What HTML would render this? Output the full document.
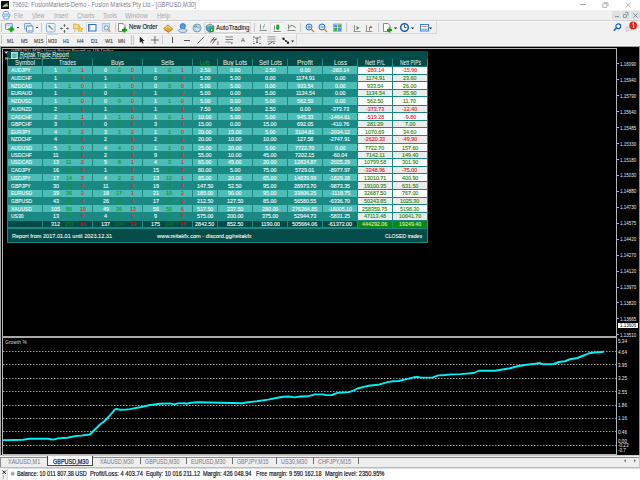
<!DOCTYPE html><html><head><meta charset="utf-8"><style>
*{margin:0;padding:0;box-sizing:border-box}
html,body{width:640px;height:480px;overflow:hidden;background:#f0f0f0;font-family:"Liberation Sans",sans-serif}
.a{position:absolute}
.t{position:absolute;white-space:nowrap;line-height:1}
svg{position:absolute;overflow:visible}
</style></head><body>

<div class="a" style="left:0px;top:0px;width:640px;height:10px;background:#ffffff;"></div>
<div class="a" style="left:1px;top:1px;width:8px;height:8px;background:#101010;"></div>
<svg style="left:1px;top:1px" width="8" height="8"><path d="M1 6.3 Q2.5 3.5 6 2.6 L7.2 5.6 Q4 5.2 1 6.3 Z" fill="#c8ccc8"/><path d="M4.2 3.2 L6.8 1.6 L6.6 3.6 Z" fill="#48a838"/></svg>
<div class="t" style="left:12.20px;top:2.00px;font-size:6.69px;color:#858090;transform:scaleX(0.862);transform-origin:0 0;">79692: FusionMarkets-Demo - Fusion Markets Pty Ltd - [GBPUSD,M30]</div>
<div class="a" style="left:580px;top:4px;width:6px;height:1px;background:#a8a8a8;"></div>
<svg style="left:601.5px;top:2px" width="7" height="6"><path d="M0.8 1.8 h4 v3.6 h-4 z M2 0.6 h4 v3.6" fill="none" stroke="#a0a0a0" stroke-width="0.8"/></svg>
<svg style="left:624.5px;top:1.5px" width="7" height="6"><path d="M0.8 0.6 L5.8 5.4 M5.8 0.6 L0.8 5.4" stroke="#a0a0a0" stroke-width="0.8"/></svg>
<div class="a" style="left:0px;top:10px;width:640px;height:10px;background:#f0f0f0;"></div>
<svg style="left:2px;top:11px" width="9" height="9"><rect x="1.5" y="0.5" width="5" height="3.5" rx="1.2" fill="#fff" stroke="#5a98e0" stroke-width="0.9"/><rect x="0.5" y="3" width="7.5" height="2.5" rx="1" fill="#e8f0fa" stroke="#5a98e0" stroke-width="0.9"/><rect x="1.8" y="5" width="5" height="3" rx="0.8" fill="#fff" stroke="#5a98e0" stroke-width="0.9"/></svg>
<div class="t" style="left:14.00px;top:13.00px;font-size:6.54px;color:#a8a8a8;transform:scaleX(0.854);transform-origin:0 0;">File</div>
<div class="a" style="left:14px;top:18px;width:3.4px;height:1px;background:#dcdcdc;"></div>
<div class="t" style="left:32.00px;top:13.00px;font-size:6.54px;color:#a8a8a8;transform:scaleX(0.889);transform-origin:0 0;">View</div>
<div class="a" style="left:32px;top:18px;width:3.9px;height:1px;background:#dcdcdc;"></div>
<div class="t" style="left:54.00px;top:13.00px;font-size:6.54px;color:#a8a8a8;transform:scaleX(0.856);transform-origin:0 0;">Insert</div>
<div class="a" style="left:54px;top:18px;width:1.6px;height:1px;background:#dcdcdc;"></div>
<div class="t" style="left:77.00px;top:13.00px;font-size:6.54px;color:#a8a8a8;transform:scaleX(0.909);transform-origin:0 0;">Charts</div>
<div class="a" style="left:77px;top:18px;width:4.3px;height:1px;background:#dcdcdc;"></div>
<div class="t" style="left:103.00px;top:13.00px;font-size:6.54px;color:#a8a8a8;transform:scaleX(0.917);transform-origin:0 0;">Tools</div>
<div class="a" style="left:103px;top:18px;width:3.7px;height:1px;background:#dcdcdc;"></div>
<div class="t" style="left:125.00px;top:13.00px;font-size:6.54px;color:#a8a8a8;transform:scaleX(0.989);transform-origin:0 0;">Window</div>
<div class="a" style="left:125px;top:18px;width:6.1px;height:1px;background:#dcdcdc;"></div>
<div class="t" style="left:157.00px;top:13.00px;font-size:6.54px;color:#a8a8a8;transform:scaleX(0.967);transform-origin:0 0;">Help</div>
<div class="a" style="left:157px;top:18px;width:4.6px;height:1px;background:#dcdcdc;"></div>
<div class="a" style="left:612px;top:11px;width:9px;height:8px;background:#e0e0e0;"></div>
<div class="a" style="left:622px;top:11px;width:8px;height:8px;background:#e0e0e0;"></div>
<div class="a" style="left:631px;top:11px;width:9px;height:8px;background:#e0e0e0;"></div>
<div class="a" style="left:615px;top:16px;width:4px;height:1px;background:#8894a8;"></div>
<svg style="left:623px;top:12px" width="6" height="6"><path d="M0.5 2.5 h3 v3 h-3 z M2 0.5 h3 v3" fill="none" stroke="#8090a8" stroke-width="0.8"/></svg>
<svg style="left:633px;top:12.5px" width="6" height="6"><path d="M0.5 0.5 L4.5 4.5 M4.5 0.5 L0.5 4.5" stroke="#7080a0" stroke-width="0.9"/></svg>
<div class="a" style="left:0px;top:20px;width:640px;height:1px;background:#cfcfcf;"></div>
<div class="a" style="left:0px;top:21px;width:640px;height:25px;background:#f0f0f0;"></div>
<div class="a" style="left:0px;top:21px;width:640px;height:1px;background:#fafafa;"></div>
<div class="a" style="left:0px;top:33px;width:436px;height:1px;background:#d8d8d8;"></div>
<div class="a" style="left:0px;top:34px;width:297px;height:1px;background:#fafafa;"></div>
<div class="a" style="left:0px;top:45px;width:640px;height:1px;background:#fafafa;"></div>
<div class="a" style="left:436px;top:21px;width:1px;height:13px;background:#d8d8d8;"></div>
<div class="a" style="left:1px;top:23px;width:1px;height:9px;background:#c4c4c4;"></div>
<div class="a" style="left:1px;top:35px;width:1px;height:9px;background:#c4c4c4;"></div>
<svg style="left:5px;top:23px" width="10" height="10"><rect x="0.5" y="0.5" width="7" height="6" rx="0.8" fill="#eef4fb" stroke="#5a94d8" stroke-width="0.9"/><path d="M1 2 h6" stroke="#5a94d8" stroke-width="0.6"/><path d="M6.3 3.5 v5.8 M3.4 6.4 h5.8" stroke="#12a812" stroke-width="2.1"/></svg>
<div class="a" style="left:17px;top:27px;width:2px;height:1px;background:#303030;"></div>
<svg style="left:24px;top:23px" width="10" height="10"><rect x="0.5" y="0.5" width="6.5" height="5.5" rx="0.6" fill="#eaf0f8" stroke="#6a9ad8" stroke-width="0.9"/><rect x="2.5" y="3" width="6.5" height="6" rx="0.6" fill="#f4f8fc" stroke="#4a84d0" stroke-width="0.9"/><path d="M1.5 3 l1.5 -1 l1.5 1 l1.5 -1" fill="none" stroke="#8aa8c8" stroke-width="0.6"/><path d="M4 7.5 h3.5" stroke="#7a98c0" stroke-width="0.6"/></svg>
<div class="a" style="left:36px;top:27px;width:2px;height:1px;background:#303030;"></div>
<div class="a" style="left:41px;top:23px;width:1px;height:9px;background:#c8c8c8;"></div>
<svg style="left:45.5px;top:23px" width="10" height="10"><rect x="0.5" y="0.5" width="8.5" height="8.5" rx="1" fill="#eaf3fc" stroke="#7ab0e8" stroke-width="0.9"/><path d="M2.5 2.5 l2 2" stroke="#20a030" stroke-width="1.4"/><path d="M4.5 4.5 l2.3 2.3" stroke="#f08040" stroke-width="1.6"/></svg>
<svg style="left:60px;top:23.5px" width="10" height="9"><path d="M4.5 0.5 v2.5 M4.5 6 v2.5 M0.5 4.5 h2.5 M6 4.5 h2.5" stroke="#606060" stroke-width="0.9"/><path d="M3.3 1.6 l1.2 -1.2 l1.2 1.2 M3.3 7.4 l1.2 1.2 l1.2 -1.2 M1.6 3.3 l-1.2 1.2 l1.2 1.2 M7.4 3.3 l1.2 1.2 l-1.2 1.2" fill="none" stroke="#606060" stroke-width="0.7"/></svg>
<svg style="left:72.5px;top:23px" width="11" height="10"><path d="M0.5 1 h2.5 l0.8 0.8 h2.5 v4 h-5.8 z" fill="#f4dc80" stroke="#c8a040" stroke-width="0.7"/><path d="M2 6 v3" stroke="#a0a0a0" stroke-width="0.7"/><path d="M7 3.5 l0.9 1.8 l2 0.2 l-1.5 1.3 l0.5 2 l-1.9 -1.1 l-1.9 1.1 l0.5 -2 l-1.5 -1.3 l2 -0.2 z" fill="#f8d840" stroke="#c89820" stroke-width="0.5"/></svg>
<div class="a" style="left:86px;top:22px;width:12px;height:11px;background:#f8f8f8;border-left:1px solid #d8d8d8;border-top:1px solid #dcdcdc"></div>
<svg style="left:87.5px;top:24px" width="9" height="8"><rect x="0.5" y="0.5" width="7.5" height="6.5" fill="#fafcff" stroke="#2a70c8" stroke-width="1"/><path d="M1.3 1 v5.5" stroke="#e06a5a" stroke-width="0.7"/><path d="M2 1 v5.5" stroke="#6aa0e0" stroke-width="0.6"/></svg>
<svg style="left:102px;top:23px" width="10" height="10"><rect x="0.5" y="0.5" width="7" height="7.5" fill="#f8fafd" stroke="#9ab4d4" stroke-width="0.7"/><path d="M0.5 2 h7" stroke="#9ab4d4" stroke-width="0.6"/><circle cx="4.2" cy="4.8" r="2.2" fill="#e4f0fa" stroke="#4a80c8" stroke-width="0.8"/><path d="M5.8 6.5 l2.6 2.6" stroke="#d0a030" stroke-width="1.2"/></svg>
<div class="a" style="left:115px;top:23px;width:1px;height:9px;background:#c8c8c8;"></div>
<svg style="left:118px;top:23px" width="10" height="10"><path d="M0.5 0.5 h4.5 l2 2 v6 h-6.5 z" fill="#fff" stroke="#707070" stroke-width="0.8"/><path d="M6.5 4.5 v5 M4 7 h5" stroke="#10a010" stroke-width="2"/></svg>
<div class="t" style="left:129.00px;top:24.00px;font-size:6.83px;color:#202028;transform:scaleX(0.863);transform-origin:0 0;-webkit-text-stroke:0.15px #202028;">New Order</div>
<svg style="left:163px;top:23.5px" width="11" height="9"><path d="M0.8 4.5 L5 1 L9.5 4.8 L5.5 8.2 Z" fill="#e8a828" stroke="#a06810" stroke-width="0.7"/><path d="M2.2 4.5 L5 2.2 L8.2 4.8" fill="none" stroke="#fff0b0" stroke-width="0.8"/><path d="M1 5.5 L5.5 8.5 L9.5 5.5" fill="none" stroke="#c08020" stroke-width="0.6"/></svg>
<svg style="left:178px;top:23px" width="10" height="10"><circle cx="4.8" cy="3.2" r="2.6" fill="#5a9ae0" stroke="#2a6ac0" stroke-width="0.8"/><ellipse cx="4.8" cy="7.6" rx="4.3" ry="1.9" fill="#d0e0f4" stroke="#5a8ad0" stroke-width="0.8"/></svg>
<svg style="left:192px;top:23px" width="10" height="10"><circle cx="5" cy="5" r="4" fill="#b8d8f0" stroke="#6090c0" stroke-width="0.8"/><path d="M2 4 q2 -2 3 0 q1 2 3 1" fill="none" stroke="#40a040" stroke-width="1"/><circle cx="6" cy="6" r="1.5" fill="#e0e0f0"/></svg>
<div class="a" style="left:204px;top:22px;width:47px;height:11px;background:#fafafa;border:1px solid #d8d8d8"></div>
<svg style="left:205px;top:23px" width="10" height="10"><path d="M1 3 L5 1 L9 3 L8.5 7 L5 9.5 L1.5 7 Z" fill="#4aa0d8" stroke="#2a70a0" stroke-width="0.7"/><path d="M2 3.5 L5 2 L7 3" fill="none" stroke="#f0c040" stroke-width="1.2"/><circle cx="7" cy="7" r="2.3" fill="#20a020"/><path d="M6.2 6 l1.8 1 l-1.8 1 z" fill="#fff"/></svg>
<div class="t" style="left:215.50px;top:25.00px;font-size:6.83px;color:#202028;transform:scaleX(0.907);transform-origin:0 0;-webkit-text-stroke:0.12px #202028;">AutoTrading</div>
<div class="a" style="left:254px;top:23px;width:1px;height:9px;background:#c8c8c8;"></div>
<svg style="left:259px;top:24px" width="9" height="8"><path d="M1.5 0.5 v5" stroke="#8a8a8a" stroke-width="1"/><path d="M5.5 0.5 L4 5" stroke="#20a030" stroke-width="1" stroke-dasharray="1 0.6"/><path d="M0.5 6.5 h7.5" stroke="#909090" stroke-width="1"/></svg>
<div class="a" style="left:270px;top:22px;width:13px;height:11px;background:#f9f9f9;border-left:1px solid #dadada;border-top:1px solid #dadada"></div>
<svg style="left:273px;top:23.5px" width="9" height="9"><path d="M1.5 1.5 v5" stroke="#8a8a8a" stroke-width="1"/><rect x="3.2" y="0.5" width="3.2" height="5.5" rx="1.4" fill="#18b030"/><path d="M0.5 7.5 h7.5" stroke="#909090" stroke-width="1"/></svg>
<svg style="left:287px;top:24px" width="10" height="8"><path d="M1.5 0.5 v5" stroke="#8a8a8a" stroke-width="1"/><path d="M1.5 4 Q4 0.5 5.5 1.5 T8.5 3.5" fill="none" stroke="#20a030" stroke-width="1"/><path d="M0.5 6.5 h8" stroke="#909090" stroke-width="1"/></svg>
<div class="a" style="left:300px;top:23px;width:1px;height:9px;background:#c8c8c8;"></div>
<svg style="left:305px;top:23px" width="10" height="10"><circle cx="4" cy="4" r="3" fill="#d8ecf8" stroke="#2a70c8" stroke-width="1"/><path d="M2.5 4 h3 M4 2.5 v3" stroke="#2a70c8" stroke-width="0.8"/><path d="M6 6 l3 3" stroke="#d09020" stroke-width="1.4"/></svg>
<svg style="left:318px;top:23px" width="10" height="10"><circle cx="4" cy="4" r="3" fill="#d8ecf8" stroke="#2a70c8" stroke-width="1"/><path d="M2.5 4 h3" stroke="#2a70c8" stroke-width="0.8"/><path d="M6 6 l3 3" stroke="#d09020" stroke-width="1.4"/></svg>
<svg style="left:333px;top:23px" width="9" height="10"><rect x="0.5" y="1" width="8" height="7.5" fill="#fff" stroke="#5a8ad0" stroke-width="0.6"/><rect x="1" y="1.5" width="3.2" height="3" fill="#4a9ae0"/><rect x="4.8" y="1.5" width="3.2" height="3" fill="#50b050"/><rect x="1" y="5" width="3.2" height="3" fill="#50b050"/><rect x="4.8" y="5" width="3.2" height="3" fill="#4a9ae0"/></svg>
<div class="a" style="left:346px;top:23px;width:1px;height:9px;background:#c8c8c8;"></div>
<svg style="left:353px;top:23px" width="9" height="10"><path d="M1.5 2 v6.5 M0.5 8.5 h7" stroke="#8a8a8a" stroke-width="0.9"/><path d="M3.5 3 l3 2 l-3 2 z" fill="#30a840"/></svg>
<svg style="left:365px;top:23px" width="9" height="10"><path d="M1.5 2 v6.5 M0.5 8.5 h7 M4.5 4 v4" stroke="#8a8a8a" stroke-width="0.9"/><path d="M5.8 2.5 l1.8 2.5 h-3.6 z" fill="#e05030"/></svg>
<div class="a" style="left:378px;top:23px;width:1px;height:9px;background:#c8c8c8;"></div>
<svg style="left:383px;top:23px" width="10" height="10"><path d="M0.5 0.5 h4.5 l2 2 v6 h-6.5 z" fill="#fff" stroke="#707070" stroke-width="0.8"/><path d="M6.5 4.5 v5 M4 7 h5" stroke="#10a010" stroke-width="2"/></svg>
<svg style="left:394px;top:27px" width="4" height="3"><path d="M0 0.5 h3.2 l-1.6 1.8 z" fill="#202020"/></svg>
<svg style="left:400px;top:23px" width="10" height="10"><circle cx="4.5" cy="4.5" r="3.8" fill="#fff" stroke="#1a5ab0" stroke-width="1.5"/><path d="M4.5 2 v2.5 h2" fill="none" stroke="#1a5ab0" stroke-width="0.9"/></svg>
<svg style="left:411px;top:27px" width="4" height="3"><path d="M0 0.5 h3.2 l-1.6 1.8 z" fill="#202020"/></svg>
<svg style="left:419.5px;top:23.5px" width="10" height="9"><rect x="0.5" y="0.5" width="8" height="6.5" fill="#f4f8fc" stroke="#3a80d8" stroke-width="1"/><path d="M1.5 2.5 h6" stroke="#e87050" stroke-width="0.8"/><path d="M1.5 5.3 h6" stroke="#40a050" stroke-width="0.8"/></svg>
<svg style="left:429.3px;top:27px" width="4" height="3"><path d="M0 0.5 h3.2 l-1.6 1.8 z" fill="#202020"/></svg>
<svg style="left:613px;top:23px" width="9" height="9"><circle cx="5.3" cy="3.3" r="2.4" fill="#fff" stroke="#1a60c8" stroke-width="1.3"/><path d="M3.5 5 L0.8 7.8" stroke="#1a60c8" stroke-width="1.6"/></svg>
<svg style="left:625px;top:21px" width="15" height="12"><path d="M1 6 h5.5 v3.5 h-3 l-2 1.5 v-1.5 h-0.5 z" fill="#e0e0e0" stroke="#c0c0c0" stroke-width="0.6"/><circle cx="8.2" cy="4.5" r="3.9" fill="#e02818"/><path d="M7.5 3 l1 -0.8 v4.8" fill="none" stroke="#fff" stroke-width="1.1"/></svg>
<div class="a" style="left:46px;top:35px;width:1px;height:10px;background:#c8c8c8;"></div>
<div class="a" style="left:47px;top:34px;width:11px;height:11px;background:#f9f9f9;border-top:1px solid #d0d0d0"></div>
<div class="t" style="left:6.80px;top:39.00px;font-size:5.81px;color:#383838;transform:scaleX(0.830);transform-origin:0 0;-webkit-text-stroke:0.1px #383838;">M1</div>
<div class="t" style="left:20.50px;top:39.00px;font-size:5.81px;color:#383838;transform:scaleX(0.805);transform-origin:0 0;-webkit-text-stroke:0.1px #383838;">M5</div>
<div class="t" style="left:33.50px;top:39.00px;font-size:5.81px;color:#383838;transform:scaleX(0.841);transform-origin:0 0;-webkit-text-stroke:0.1px #383838;">M15</div>
<div class="t" style="left:48.00px;top:39.00px;font-size:5.81px;color:#383838;transform:scaleX(0.796);transform-origin:0 0;-webkit-text-stroke:0.1px #383838;">M30</div>
<div class="t" style="left:63.00px;top:39.00px;font-size:5.81px;color:#383838;transform:scaleX(0.835);transform-origin:0 0;-webkit-text-stroke:0.1px #383838;">H1</div>
<div class="t" style="left:76.50px;top:39.00px;font-size:5.81px;color:#383838;transform:scaleX(0.902);transform-origin:0 0;-webkit-text-stroke:0.1px #383838;">H4</div>
<div class="t" style="left:90.80px;top:39.00px;font-size:5.81px;color:#383838;transform:scaleX(0.902);transform-origin:0 0;-webkit-text-stroke:0.1px #383838;">D1</div>
<div class="t" style="left:104.50px;top:39.00px;font-size:5.81px;color:#383838;transform:scaleX(0.918);transform-origin:0 0;-webkit-text-stroke:0.1px #383838;">W1</div>
<div class="t" style="left:118.00px;top:39.00px;font-size:5.81px;color:#383838;transform:scaleX(0.775);transform-origin:0 0;-webkit-text-stroke:0.1px #383838;">MN</div>
<div class="a" style="left:131px;top:35px;width:1px;height:10px;background:#c8c8c8;"></div>
<div class="a" style="left:133px;top:35px;width:1px;height:10px;background:#c8c8c8;"></div>
<div class="a" style="left:135px;top:34px;width:13px;height:11px;background:#f6f6f6;"></div>
<svg style="left:138.5px;top:36px" width="7" height="8"><path d="M0.8 0.5 v6.5 l1.6 -1.5 l1.3 2.3 l1 -0.5 l-1.2 -2.3 l2.2 -0.1 z" fill="#202020"/></svg>
<svg style="left:151px;top:36px" width="8" height="8"><path d="M4 0 v8 M0 4 h8" stroke="#505050" stroke-width="0.8"/></svg>
<div class="a" style="left:162px;top:35px;width:1px;height:9px;background:#c8c8c8;"></div>
<div class="a" style="left:172px;top:37px;width:1px;height:6px;background:#505050;"></div>
<div class="a" style="left:184px;top:40px;width:6px;height:1px;background:#505050;"></div>
<svg style="left:197px;top:36px" width="8" height="8"><path d="M0.5 7.5 L7 0.8" stroke="#505050" stroke-width="0.9"/></svg>
<svg style="left:210px;top:36px" width="10" height="9"><path d="M0.5 6.5 L4.5 1 M2.5 7.5 L6.5 2 M1.5 4 L6.5 3.5" stroke="#404040" stroke-width="0.8"/><path d="M7 6 h1.8 M7 7.2 h1.5 M7 8.4 h1.8" stroke="#404040" stroke-width="0.5"/></svg>
<svg style="left:225px;top:36px" width="9" height="9"><path d="M0.5 1 h7.5 M0.5 3.5 h7.5 M0.5 6 h5" stroke="#505050" stroke-width="0.7"/><path d="M5.5 6.5 l2.5 0 l-1.2 1.6 z" fill="#404040"/></svg>
<div class="t" style="left:241.30px;top:37.00px;font-size:6.25px;color:#404040;transform:scaleX(0.912);transform-origin:0 0;">A</div>
<svg style="left:253px;top:36px" width="8" height="8"><path d="M0.5 1 v6.5 M7 1 v6.5" stroke="#808080" stroke-width="0.6" stroke-dasharray="1 1"/><path d="M2 2 h4 M4 2 v4.5 M3 6.5 h2" stroke="#404040" stroke-width="0.8"/><path d="M0 1 h2 M6 1 h2 M0 7.5 h2 M6 7.5 h2" stroke="#404040" stroke-width="0.6"/></svg>
<svg style="left:266.5px;top:36px" width="9" height="9"><path d="M0.5 0.8 h8 M0.5 3 h8 M0.5 5.3 h8" stroke="#606060" stroke-width="0.6"/><path d="M1 8.5 L5.5 6" stroke="#404040" stroke-width="0.8"/><path d="M5.8 6.8 l2.2 0 l-1 1.5 z" fill="#404040"/></svg>
<svg style="left:281.5px;top:37px" width="8" height="8"><path d="M1.5 2 L6 5.5" stroke="#404040" stroke-width="0.7"/><circle cx="1.5" cy="1.8" r="1.2" fill="#202020"/><circle cx="4" cy="4" r="0.9" fill="#202020"/><circle cx="6" cy="5.8" r="1.2" fill="#202020"/></svg>
<svg style="left:291px;top:39.5px" width="4" height="3"><path d="M0 0.5 h3.2 l-1.6 1.8 z" fill="#202020"/></svg>
<div class="a" style="left:296px;top:34px;width:1px;height:11px;background:#d8d8d8;"></div>
<div class="a" style="left:0px;top:46px;width:640px;height:410px;background:#000;"></div>
<div class="a" style="left:0px;top:46px;width:1px;height:420px;background:#a8a8a8;"></div>
<div class="a" style="left:0px;top:46px;width:640px;height:1px;background:#a0a0a0;"></div>
<div class="a" style="left:2px;top:48px;width:615px;height:1px;background:#b4b4b4;"></div>
<div class="a" style="left:2px;top:48px;width:1px;height:407px;background:#b4b4b4;"></div>
<div class="a" style="left:616px;top:48px;width:1px;height:407px;background:#b4b4b4;"></div>
<div class="a" style="left:2px;top:454px;width:615px;height:1px;background:#b4b4b4;"></div>
<div class="a" style="left:2px;top:336px;width:615px;height:2px;background:#a8a8a8;"></div>
<div class="a" style="left:639px;top:46px;width:1px;height:410px;background:#909090;"></div>
<div class="a" style="left:617px;top:63px;width:2px;height:1px;background:#b4b4b4;"></div>
<div class="t" style="left:619.80px;top:62.00px;font-size:5.50px;color:#e8e8e8;transform:scaleX(0.815);transform-origin:0 0;">1.16090</div>
<div class="a" style="left:617px;top:79px;width:2px;height:1px;background:#b4b4b4;"></div>
<div class="t" style="left:619.80px;top:78.00px;font-size:5.50px;color:#e8e8e8;transform:scaleX(0.815);transform-origin:0 0;">1.15940</div>
<div class="a" style="left:617px;top:95px;width:2px;height:1px;background:#b4b4b4;"></div>
<div class="t" style="left:619.80px;top:94.00px;font-size:5.50px;color:#e8e8e8;transform:scaleX(0.815);transform-origin:0 0;">1.15790</div>
<div class="a" style="left:617px;top:111px;width:2px;height:1px;background:#b4b4b4;"></div>
<div class="t" style="left:619.80px;top:110.00px;font-size:5.50px;color:#e8e8e8;transform:scaleX(0.815);transform-origin:0 0;">1.15640</div>
<div class="a" style="left:617px;top:127px;width:2px;height:1px;background:#b4b4b4;"></div>
<div class="t" style="left:619.80px;top:126.00px;font-size:5.50px;color:#e8e8e8;transform:scaleX(0.815);transform-origin:0 0;">1.15485</div>
<div class="a" style="left:617px;top:143px;width:2px;height:1px;background:#b4b4b4;"></div>
<div class="t" style="left:619.80px;top:142.00px;font-size:5.50px;color:#e8e8e8;transform:scaleX(0.815);transform-origin:0 0;">1.15330</div>
<div class="a" style="left:617px;top:159px;width:2px;height:1px;background:#b4b4b4;"></div>
<div class="t" style="left:619.80px;top:158.00px;font-size:5.50px;color:#e8e8e8;transform:scaleX(0.815);transform-origin:0 0;">1.15180</div>
<div class="a" style="left:617px;top:175px;width:2px;height:1px;background:#b4b4b4;"></div>
<div class="t" style="left:619.80px;top:173.00px;font-size:5.50px;color:#e8e8e8;transform:scaleX(0.815);transform-origin:0 0;">1.15030</div>
<div class="a" style="left:617px;top:191px;width:2px;height:1px;background:#b4b4b4;"></div>
<div class="t" style="left:619.80px;top:189.00px;font-size:5.50px;color:#e8e8e8;transform:scaleX(0.815);transform-origin:0 0;">1.14880</div>
<div class="a" style="left:617px;top:207px;width:2px;height:1px;background:#b4b4b4;"></div>
<div class="t" style="left:619.80px;top:205.00px;font-size:5.50px;color:#e8e8e8;transform:scaleX(0.815);transform-origin:0 0;">1.14730</div>
<div class="a" style="left:617px;top:223px;width:2px;height:1px;background:#b4b4b4;"></div>
<div class="t" style="left:619.80px;top:221.00px;font-size:5.50px;color:#e8e8e8;transform:scaleX(0.815);transform-origin:0 0;">1.14575</div>
<div class="a" style="left:617px;top:239px;width:2px;height:1px;background:#b4b4b4;"></div>
<div class="t" style="left:619.80px;top:237.00px;font-size:5.50px;color:#e8e8e8;transform:scaleX(0.815);transform-origin:0 0;">1.14420</div>
<div class="a" style="left:617px;top:255px;width:2px;height:1px;background:#b4b4b4;"></div>
<div class="t" style="left:619.80px;top:253.00px;font-size:5.50px;color:#e8e8e8;transform:scaleX(0.815);transform-origin:0 0;">1.14270</div>
<div class="a" style="left:617px;top:271px;width:2px;height:1px;background:#b4b4b4;"></div>
<div class="t" style="left:619.80px;top:269.00px;font-size:5.50px;color:#e8e8e8;transform:scaleX(0.815);transform-origin:0 0;">1.14120</div>
<div class="a" style="left:617px;top:287px;width:2px;height:1px;background:#b4b4b4;"></div>
<div class="t" style="left:619.80px;top:285.00px;font-size:5.50px;color:#e8e8e8;transform:scaleX(0.815);transform-origin:0 0;">1.13970</div>
<div class="a" style="left:617px;top:302px;width:2px;height:1px;background:#b4b4b4;"></div>
<div class="t" style="left:619.80px;top:301.00px;font-size:5.50px;color:#e8e8e8;transform:scaleX(0.815);transform-origin:0 0;">1.13820</div>
<div class="a" style="left:617px;top:318px;width:2px;height:1px;background:#b4b4b4;"></div>
<div class="t" style="left:619.80px;top:317.00px;font-size:5.50px;color:#e8e8e8;transform:scaleX(0.815);transform-origin:0 0;">1.13665</div>
<div class="a" style="left:617px;top:334px;width:2px;height:1px;background:#b4b4b4;"></div>
<div class="t" style="left:619.80px;top:333.00px;font-size:5.50px;color:#e8e8e8;transform:scaleX(0.815);transform-origin:0 0;">1.13510</div>
<div class="a" style="left:618px;top:323px;width:20px;height:5px;background:#ffffff;"></div>
<div class="t" style="left:619.50px;top:323.00px;font-size:5.50px;color:#101010;transform:scaleX(0.815);transform-origin:0 0;">1.13606</div>
<div class="t" style="left:4.50px;top:340.00px;font-size:5.38px;color:#d8d8d8;transform:scaleX(0.931);transform-origin:0 0;">Growth %</div>
<div class="t" style="left:618.20px;top:339.00px;font-size:5.22px;color:#ececec;transform:scaleX(0.880);transform-origin:0 0;">5.34</div>
<div class="t" style="left:618.20px;top:350.00px;font-size:5.22px;color:#ececec;transform:scaleX(0.880);transform-origin:0 0;">4.64</div>
<div class="t" style="left:618.20px;top:363.00px;font-size:5.22px;color:#ececec;transform:scaleX(0.880);transform-origin:0 0;">3.95</div>
<div class="t" style="left:618.20px;top:376.00px;font-size:5.22px;color:#ececec;transform:scaleX(0.880);transform-origin:0 0;">3.25</div>
<div class="t" style="left:618.20px;top:390.00px;font-size:5.22px;color:#ececec;transform:scaleX(0.880);transform-origin:0 0;">2.55</div>
<div class="t" style="left:618.20px;top:403.00px;font-size:5.22px;color:#ececec;transform:scaleX(0.880);transform-origin:0 0;">1.86</div>
<div class="t" style="left:618.20px;top:416.00px;font-size:5.22px;color:#ececec;transform:scaleX(0.880);transform-origin:0 0;">1.16</div>
<div class="t" style="left:618.20px;top:430.00px;font-size:5.22px;color:#ececec;transform:scaleX(0.880);transform-origin:0 0;">0.46</div>
<div class="t" style="left:618.20px;top:439.00px;font-size:5.22px;color:#ececec;transform:scaleX(0.880);transform-origin:0 0;">0.00</div>
<div class="t" style="left:618.20px;top:443.00px;font-size:5.22px;color:#ececec;transform:scaleX(0.880);transform-origin:0 0;">-0.23</div>
<div class="t" style="left:618.20px;top:448.00px;font-size:5.22px;color:#ececec;transform:scaleX(0.880);transform-origin:0 0;">-0.7</div>
<div class="a" style="left:3px;top:351px;width:613px;height:1px;background:repeating-linear-gradient(90deg,#9a9a9a 0 1px,#4a4a4a 1px 2px,transparent 2px 3px)"></div>
<div class="a" style="left:3px;top:364px;width:613px;height:1px;background:repeating-linear-gradient(90deg,#9a9a9a 0 1px,#4a4a4a 1px 2px,transparent 2px 3px)"></div>
<div class="a" style="left:3px;top:378px;width:613px;height:1px;background:repeating-linear-gradient(90deg,#9a9a9a 0 1px,#4a4a4a 1px 2px,transparent 2px 3px)"></div>
<div class="a" style="left:3px;top:391px;width:613px;height:1px;background:repeating-linear-gradient(90deg,#9a9a9a 0 1px,#4a4a4a 1px 2px,transparent 2px 3px)"></div>
<div class="a" style="left:3px;top:405px;width:613px;height:1px;background:repeating-linear-gradient(90deg,#9a9a9a 0 1px,#4a4a4a 1px 2px,transparent 2px 3px)"></div>
<div class="a" style="left:3px;top:418px;width:613px;height:1px;background:repeating-linear-gradient(90deg,#9a9a9a 0 1px,#4a4a4a 1px 2px,transparent 2px 3px)"></div>
<div class="a" style="left:3px;top:431px;width:613px;height:1px;background:repeating-linear-gradient(90deg,#9a9a9a 0 1px,#4a4a4a 1px 2px,transparent 2px 3px)"></div>
<div class="a" style="left:3px;top:445px;width:613px;height:1px;background:repeating-linear-gradient(90deg,#9a9a9a 0 1px,#4a4a4a 1px 2px,transparent 2px 3px)"></div>
<svg style="left:0;top:0" width="640" height="480"><path d="M3,440.3 L23,439.8 L29.7,438.75 L48.4,438.75 L51.6,439.5 L54.7,439.4 L57.8,438.4 L67.2,437.7 L75,436.1 L81.25,435.6 L89.8,434.5 L100,424.5 L104,421.5 L109.5,416 L115,409.3 L117,408.8 L118.5,409.6 L121,409.8 L126,409.5 L130,409.1 L141.3,407 L148.8,405.3 L160,403.75 L170.3,403.4 L174,404.3 L177.8,403.4 L184.4,403.2 L186.3,403.75 L191,402.8 L198.5,402.3 L220,402.8 L242.6,403.2 L247.5,402.3 L256.9,401.3 L268.1,399.6 L277.5,397.8 L283.2,396.8 L288.8,396.5 L294.4,397.4 L300,396.5 L307.5,396.3 L315,394.4 L322.5,394.4 L326.3,395.1 L332,395 L337.6,392.9 L343.2,392.5 L348.8,392.1 L353.5,390.6 L357.5,388.5 L368.8,385.7 L378.1,384.8 L387.5,382.1 L393.2,381.2 L398.8,381 L406.3,379.1 L413.8,377.3 L417.5,376.9 L421.3,377.6 L432.5,377.6 L438.2,375.4 L445.7,375 L451.3,374.4 L460.7,374.1 L473.75,373 L478.75,370.75 L495,370.75 L502.5,369.5 L510,368.25 L517.5,366.25 L525,365 L535,363.75 L540,363 L542.5,364.25 L553.75,364 L558.75,362 L565,361.25 L570,359.25 L577.5,358 L585,355 L588.75,353.25 L595,352.5 L603.75,351.75" fill="none" stroke="#00f0f4" stroke-width="1.9" stroke-linejoin="round"/></svg>
<div class="t" style="left:11.00px;top:49.00px;font-size:4.36px;color:#e0d8c0;transform:scaleX(1.082);transform-origin:0 0;">GBPUSD,M30: Great Britain Pound vs US Dollar</div>
<div class="a" style="left:7px;top:51px;width:421px;height:192px;background:#1a8984;"></div>
<div class="a" style="left:7px;top:51px;width:421px;height:7.5px;background:#004d49;"></div>
<svg style="left:3.5px;top:51px" width="5" height="4"><path d="M0.3 0.5 h3.8 l-1.9 2.3 z" fill="#f0f0f0"/></svg>
<svg style="left:10.5px;top:51.5px" width="8" height="8"><rect x="0.5" y="0.5" width="6" height="6.5" fill="#7ad8d0" stroke="#c8f0ea" stroke-width="0.8"/><path d="M1.5 2.5 h4 M1.5 4 h4 M1.5 5.5 h4" stroke="#2a8a84" stroke-width="0.6"/></svg>
<div class="t" style="left:19.70px;top:51.00px;font-size:7.70px;color:#f8f4e8;transform:scaleX(0.708);transform-origin:0 0;">Reitak Trade Report</div>
<div class="t" style="left:4.50px;top:57.00px;font-size:4.36px;color:#f8ecd0;transform:scaleX(1.044);transform-origin:0 0;">Reitak FX Pattern Pro Indicator</div>
<div class="a" style="left:8px;top:59px;width:34px;height:7px;background:#014b47;"></div>
<div class="t" style="left:15.00px;top:60.00px;font-size:6.69px;color:#eef4f2;transform:scaleX(0.897);transform-origin:0 0;">Symbol</div>
<div class="a" style="left:43px;top:59px;width:49px;height:7px;background:#014b47;"></div>
<div class="t" style="left:59.00px;top:60.00px;font-size:6.69px;color:#eef4f2;transform:scaleX(0.826);transform-origin:0 0;">Trades</div>
<div class="a" style="left:93px;top:59px;width:49px;height:7px;background:#014b47;"></div>
<div class="t" style="left:111.00px;top:60.00px;font-size:6.69px;color:#eef4f2;transform:scaleX(0.874);transform-origin:0 0;">Buys</div>
<div class="a" style="left:143px;top:59px;width:49px;height:7px;background:#014b47;"></div>
<div class="t" style="left:161.00px;top:60.00px;font-size:6.69px;color:#eef4f2;transform:scaleX(0.897);transform-origin:0 0;">Sells</div>
<div class="a" style="left:193px;top:59px;width:24px;height:7px;background:#014b47;"></div>
<div class="t" style="left:200.00px;top:60.00px;font-size:6.69px;color:#1a9a2a;transform:scaleX(0.791);transform-origin:0 0;">Lots</div>
<div class="a" style="left:218px;top:59px;width:34px;height:7px;background:#014b47;"></div>
<div class="t" style="left:223.00px;top:60.00px;font-size:6.69px;color:#eef4f2;transform:scaleX(0.922);transform-origin:0 0;">Buy Lots</div>
<div class="a" style="left:253px;top:59px;width:34px;height:7px;background:#014b47;"></div>
<div class="t" style="left:258.50px;top:60.00px;font-size:6.69px;color:#eef4f2;transform:scaleX(0.896);transform-origin:0 0;">Sell Lots</div>
<div class="a" style="left:288px;top:59px;width:34px;height:7px;background:#014b47;"></div>
<div class="t" style="left:297.00px;top:60.00px;font-size:6.69px;color:#eef4f2;transform:scaleX(1.025);transform-origin:0 0;">Profit</div>
<div class="a" style="left:323px;top:59px;width:34px;height:7px;background:#014b47;"></div>
<div class="t" style="left:333.50px;top:60.00px;font-size:6.69px;color:#eef4f2;transform:scaleX(0.920);transform-origin:0 0;">Loss</div>
<div class="a" style="left:358px;top:59px;width:34px;height:7px;background:#014b47;"></div>
<div class="t" style="left:365.00px;top:60.00px;font-size:6.69px;color:#eef4f2;transform:scaleX(0.827);transform-origin:0 0;">Nett P/L</div>
<div class="a" style="left:393px;top:59px;width:34px;height:7px;background:#014b47;"></div>
<div class="t" style="left:399.50px;top:60.00px;font-size:6.69px;color:#eef4f2;transform:scaleX(0.743);transform-origin:0 0;">Nett PIPs</div>
<div class="a" style="left:8px;top:66px;width:34px;height:8px;background:#4bbcb6;"></div>
<div class="t" style="left:11.00px;top:68.00px;font-size:5.81px;color:#f6fbfa;transform:scaleX(0.861);transform-origin:0 0;-webkit-text-stroke:0.12px #f6fbfa;">AUDJPY</div>
<div class="a" style="left:43px;top:66px;width:49px;height:8px;background:#4bbcb6;"></div>
<div class="t" style="left:54.01px;top:68.00px;font-size:5.64px;color:#f6fbfa;transform:scaleX(0.950);transform-origin:0 0;-webkit-text-stroke:0.12px #f6fbfa;">1</div>
<div class="t" style="left:67.51px;top:68.00px;font-size:5.64px;color:#109a20;transform:scaleX(0.950);transform-origin:0 0;-webkit-text-stroke:0.12px #109a20;">0</div>
<div class="t" style="left:81.01px;top:68.00px;font-size:5.64px;color:#e81c1c;transform:scaleX(0.950);transform-origin:0 0;-webkit-text-stroke:0.12px #e81c1c;">1</div>
<div class="a" style="left:93px;top:66px;width:49px;height:8px;background:#4bbcb6;"></div>
<div class="t" style="left:104.01px;top:68.00px;font-size:5.64px;color:#f6fbfa;transform:scaleX(0.950);transform-origin:0 0;-webkit-text-stroke:0.12px #f6fbfa;">0</div>
<div class="t" style="left:117.51px;top:68.00px;font-size:5.64px;color:#109a20;transform:scaleX(0.950);transform-origin:0 0;-webkit-text-stroke:0.12px #109a20;">0</div>
<div class="t" style="left:131.01px;top:68.00px;font-size:5.64px;color:#e81c1c;transform:scaleX(0.950);transform-origin:0 0;-webkit-text-stroke:0.12px #e81c1c;">0</div>
<div class="a" style="left:143px;top:66px;width:49px;height:8px;background:#4bbcb6;"></div>
<div class="t" style="left:154.01px;top:68.00px;font-size:5.64px;color:#f6fbfa;transform:scaleX(0.950);transform-origin:0 0;-webkit-text-stroke:0.12px #f6fbfa;">1</div>
<div class="t" style="left:167.51px;top:68.00px;font-size:5.64px;color:#109a20;transform:scaleX(0.950);transform-origin:0 0;-webkit-text-stroke:0.12px #109a20;">0</div>
<div class="t" style="left:181.01px;top:68.00px;font-size:5.64px;color:#e81c1c;transform:scaleX(0.950);transform-origin:0 0;-webkit-text-stroke:0.12px #e81c1c;">1</div>
<div class="a" style="left:193px;top:66px;width:24px;height:8px;background:#4bbcb6;"></div>
<div class="t" style="left:199.78px;top:68.00px;font-size:5.64px;color:#f6fbfa;transform:scaleX(0.950);transform-origin:0 0;-webkit-text-stroke:0.12px #f6fbfa;">2.50</div>
<div class="a" style="left:218px;top:66px;width:34px;height:8px;background:#4bbcb6;"></div>
<div class="t" style="left:229.78px;top:68.00px;font-size:5.64px;color:#f6fbfa;transform:scaleX(0.950);transform-origin:0 0;-webkit-text-stroke:0.12px #f6fbfa;">0.00</div>
<div class="a" style="left:253px;top:66px;width:34px;height:8px;background:#4bbcb6;"></div>
<div class="t" style="left:264.78px;top:68.00px;font-size:5.64px;color:#f6fbfa;transform:scaleX(0.950);transform-origin:0 0;-webkit-text-stroke:0.12px #f6fbfa;">2.50</div>
<div class="a" style="left:288px;top:66px;width:34px;height:8px;background:#4bbcb6;"></div>
<div class="t" style="left:299.78px;top:68.00px;font-size:5.64px;color:#f6fbfa;transform:scaleX(0.950);transform-origin:0 0;-webkit-text-stroke:0.12px #f6fbfa;">0.00</div>
<div class="a" style="left:323px;top:66px;width:34px;height:8px;background:#4bbcb6;"></div>
<div class="t" style="left:330.91px;top:68.00px;font-size:5.64px;color:#f6fbfa;transform:scaleX(0.950);transform-origin:0 0;-webkit-text-stroke:0.12px #f6fbfa;">-283.14</div>
<div class="a" style="left:358px;top:67px;width:34px;height:7px;background:#ffffff;"></div>
<div class="t" style="left:365.91px;top:68.00px;font-size:5.64px;color:#f01818;transform:scaleX(0.950);transform-origin:0 0;-webkit-text-stroke:0.12px #f01818;">-283.14</div>
<div class="a" style="left:393px;top:67px;width:34px;height:7px;background:#ffffff;"></div>
<div class="t" style="left:402.40px;top:68.00px;font-size:5.64px;color:#f01818;transform:scaleX(0.950);transform-origin:0 0;-webkit-text-stroke:0.12px #f01818;">-15.90</div>
<div class="t" style="left:11.00px;top:76.00px;font-size:5.81px;color:#f6fbfa;transform:scaleX(0.861);transform-origin:0 0;-webkit-text-stroke:0.12px #f6fbfa;">AUDCHF</div>
<div class="t" style="left:54.01px;top:76.00px;font-size:5.64px;color:#f6fbfa;transform:scaleX(0.950);transform-origin:0 0;-webkit-text-stroke:0.12px #f6fbfa;">1</div>
<div class="t" style="left:67.51px;top:76.00px;font-size:5.64px;color:#109a20;transform:scaleX(0.950);transform-origin:0 0;-webkit-text-stroke:0.12px #109a20;">1</div>
<div class="t" style="left:81.01px;top:76.00px;font-size:5.64px;color:#e81c1c;transform:scaleX(0.950);transform-origin:0 0;-webkit-text-stroke:0.12px #e81c1c;">0</div>
<div class="t" style="left:104.01px;top:76.00px;font-size:5.64px;color:#f6fbfa;transform:scaleX(0.950);transform-origin:0 0;-webkit-text-stroke:0.12px #f6fbfa;">1</div>
<div class="t" style="left:117.51px;top:76.00px;font-size:5.64px;color:#109a20;transform:scaleX(0.950);transform-origin:0 0;-webkit-text-stroke:0.12px #109a20;">1</div>
<div class="t" style="left:131.01px;top:76.00px;font-size:5.64px;color:#e81c1c;transform:scaleX(0.950);transform-origin:0 0;-webkit-text-stroke:0.12px #e81c1c;">0</div>
<div class="t" style="left:154.01px;top:76.00px;font-size:5.64px;color:#f6fbfa;transform:scaleX(0.950);transform-origin:0 0;-webkit-text-stroke:0.12px #f6fbfa;">0</div>
<div class="t" style="left:167.51px;top:76.00px;font-size:5.64px;color:#109a20;transform:scaleX(0.950);transform-origin:0 0;-webkit-text-stroke:0.12px #109a20;">0</div>
<div class="t" style="left:181.01px;top:76.00px;font-size:5.64px;color:#e81c1c;transform:scaleX(0.950);transform-origin:0 0;-webkit-text-stroke:0.12px #e81c1c;">0</div>
<div class="t" style="left:199.78px;top:76.00px;font-size:5.64px;color:#f6fbfa;transform:scaleX(0.950);transform-origin:0 0;-webkit-text-stroke:0.12px #f6fbfa;">5.00</div>
<div class="t" style="left:229.78px;top:76.00px;font-size:5.64px;color:#f6fbfa;transform:scaleX(0.950);transform-origin:0 0;-webkit-text-stroke:0.12px #f6fbfa;">5.00</div>
<div class="t" style="left:264.78px;top:76.00px;font-size:5.64px;color:#f6fbfa;transform:scaleX(0.950);transform-origin:0 0;-webkit-text-stroke:0.12px #f6fbfa;">0.00</div>
<div class="t" style="left:295.51px;top:76.00px;font-size:5.64px;color:#f6fbfa;transform:scaleX(0.950);transform-origin:0 0;-webkit-text-stroke:0.12px #f6fbfa;">1174.91</div>
<div class="t" style="left:334.78px;top:76.00px;font-size:5.64px;color:#f6fbfa;transform:scaleX(0.950);transform-origin:0 0;-webkit-text-stroke:0.12px #f6fbfa;">0.00</div>
<div class="a" style="left:358px;top:75px;width:34px;height:6px;background:#ebebeb;"></div>
<div class="t" style="left:365.51px;top:76.00px;font-size:5.64px;color:#2a8508;transform:scaleX(0.950);transform-origin:0 0;-webkit-text-stroke:0.12px #2a8508;">1174.91</div>
<div class="a" style="left:393px;top:75px;width:34px;height:6px;background:#ebebeb;"></div>
<div class="t" style="left:403.29px;top:76.00px;font-size:5.64px;color:#2a8508;transform:scaleX(0.950);transform-origin:0 0;-webkit-text-stroke:0.12px #2a8508;">23.60</div>
<div class="a" style="left:8px;top:82px;width:34px;height:7px;background:#4bbcb6;"></div>
<div class="t" style="left:11.00px;top:84.00px;font-size:5.81px;color:#f6fbfa;transform:scaleX(0.861);transform-origin:0 0;-webkit-text-stroke:0.12px #f6fbfa;">NZDCAD</div>
<div class="a" style="left:43px;top:82px;width:49px;height:7px;background:#4bbcb6;"></div>
<div class="t" style="left:54.01px;top:84.00px;font-size:5.64px;color:#f6fbfa;transform:scaleX(0.950);transform-origin:0 0;-webkit-text-stroke:0.12px #f6fbfa;">1</div>
<div class="t" style="left:67.51px;top:84.00px;font-size:5.64px;color:#109a20;transform:scaleX(0.950);transform-origin:0 0;-webkit-text-stroke:0.12px #109a20;">1</div>
<div class="t" style="left:81.01px;top:84.00px;font-size:5.64px;color:#e81c1c;transform:scaleX(0.950);transform-origin:0 0;-webkit-text-stroke:0.12px #e81c1c;">0</div>
<div class="a" style="left:93px;top:82px;width:49px;height:7px;background:#4bbcb6;"></div>
<div class="t" style="left:104.01px;top:84.00px;font-size:5.64px;color:#f6fbfa;transform:scaleX(0.950);transform-origin:0 0;-webkit-text-stroke:0.12px #f6fbfa;">1</div>
<div class="t" style="left:117.51px;top:84.00px;font-size:5.64px;color:#109a20;transform:scaleX(0.950);transform-origin:0 0;-webkit-text-stroke:0.12px #109a20;">1</div>
<div class="t" style="left:131.01px;top:84.00px;font-size:5.64px;color:#e81c1c;transform:scaleX(0.950);transform-origin:0 0;-webkit-text-stroke:0.12px #e81c1c;">0</div>
<div class="a" style="left:143px;top:82px;width:49px;height:7px;background:#4bbcb6;"></div>
<div class="t" style="left:154.01px;top:84.00px;font-size:5.64px;color:#f6fbfa;transform:scaleX(0.950);transform-origin:0 0;-webkit-text-stroke:0.12px #f6fbfa;">0</div>
<div class="t" style="left:167.51px;top:84.00px;font-size:5.64px;color:#109a20;transform:scaleX(0.950);transform-origin:0 0;-webkit-text-stroke:0.12px #109a20;">0</div>
<div class="t" style="left:181.01px;top:84.00px;font-size:5.64px;color:#e81c1c;transform:scaleX(0.950);transform-origin:0 0;-webkit-text-stroke:0.12px #e81c1c;">0</div>
<div class="a" style="left:193px;top:82px;width:24px;height:7px;background:#4bbcb6;"></div>
<div class="t" style="left:199.78px;top:84.00px;font-size:5.64px;color:#f6fbfa;transform:scaleX(0.950);transform-origin:0 0;-webkit-text-stroke:0.12px #f6fbfa;">5.00</div>
<div class="a" style="left:218px;top:82px;width:34px;height:7px;background:#4bbcb6;"></div>
<div class="t" style="left:229.78px;top:84.00px;font-size:5.64px;color:#f6fbfa;transform:scaleX(0.950);transform-origin:0 0;-webkit-text-stroke:0.12px #f6fbfa;">5.00</div>
<div class="a" style="left:253px;top:82px;width:34px;height:7px;background:#4bbcb6;"></div>
<div class="t" style="left:264.78px;top:84.00px;font-size:5.64px;color:#f6fbfa;transform:scaleX(0.950);transform-origin:0 0;-webkit-text-stroke:0.12px #f6fbfa;">0.00</div>
<div class="a" style="left:288px;top:82px;width:34px;height:7px;background:#4bbcb6;"></div>
<div class="t" style="left:296.80px;top:84.00px;font-size:5.64px;color:#f6fbfa;transform:scaleX(0.950);transform-origin:0 0;-webkit-text-stroke:0.12px #f6fbfa;">933.54</div>
<div class="a" style="left:323px;top:82px;width:34px;height:7px;background:#4bbcb6;"></div>
<div class="t" style="left:334.78px;top:84.00px;font-size:5.64px;color:#f6fbfa;transform:scaleX(0.950);transform-origin:0 0;-webkit-text-stroke:0.12px #f6fbfa;">0.00</div>
<div class="a" style="left:358px;top:82px;width:34px;height:7px;background:#ffffff;"></div>
<div class="t" style="left:366.80px;top:84.00px;font-size:5.64px;color:#2a8508;transform:scaleX(0.950);transform-origin:0 0;-webkit-text-stroke:0.12px #2a8508;">933.54</div>
<div class="a" style="left:393px;top:82px;width:34px;height:7px;background:#ffffff;"></div>
<div class="t" style="left:403.29px;top:84.00px;font-size:5.64px;color:#2a8508;transform:scaleX(0.950);transform-origin:0 0;-webkit-text-stroke:0.12px #2a8508;">26.00</div>
<div class="t" style="left:11.00px;top:91.00px;font-size:5.81px;color:#f6fbfa;transform:scaleX(0.861);transform-origin:0 0;-webkit-text-stroke:0.12px #f6fbfa;">EURAUD</div>
<div class="t" style="left:54.01px;top:91.00px;font-size:5.64px;color:#f6fbfa;transform:scaleX(0.950);transform-origin:0 0;-webkit-text-stroke:0.12px #f6fbfa;">1</div>
<div class="t" style="left:67.51px;top:91.00px;font-size:5.64px;color:#109a20;transform:scaleX(0.950);transform-origin:0 0;-webkit-text-stroke:0.12px #109a20;">1</div>
<div class="t" style="left:81.01px;top:91.00px;font-size:5.64px;color:#e81c1c;transform:scaleX(0.950);transform-origin:0 0;-webkit-text-stroke:0.12px #e81c1c;">0</div>
<div class="t" style="left:104.01px;top:91.00px;font-size:5.64px;color:#f6fbfa;transform:scaleX(0.950);transform-origin:0 0;-webkit-text-stroke:0.12px #f6fbfa;">0</div>
<div class="t" style="left:117.51px;top:91.00px;font-size:5.64px;color:#109a20;transform:scaleX(0.950);transform-origin:0 0;-webkit-text-stroke:0.12px #109a20;">0</div>
<div class="t" style="left:131.01px;top:91.00px;font-size:5.64px;color:#e81c1c;transform:scaleX(0.950);transform-origin:0 0;-webkit-text-stroke:0.12px #e81c1c;">0</div>
<div class="t" style="left:154.01px;top:91.00px;font-size:5.64px;color:#f6fbfa;transform:scaleX(0.950);transform-origin:0 0;-webkit-text-stroke:0.12px #f6fbfa;">1</div>
<div class="t" style="left:167.51px;top:91.00px;font-size:5.64px;color:#109a20;transform:scaleX(0.950);transform-origin:0 0;-webkit-text-stroke:0.12px #109a20;">1</div>
<div class="t" style="left:181.01px;top:91.00px;font-size:5.64px;color:#e81c1c;transform:scaleX(0.950);transform-origin:0 0;-webkit-text-stroke:0.12px #e81c1c;">0</div>
<div class="t" style="left:199.78px;top:91.00px;font-size:5.64px;color:#f6fbfa;transform:scaleX(0.950);transform-origin:0 0;-webkit-text-stroke:0.12px #f6fbfa;">5.00</div>
<div class="t" style="left:229.78px;top:91.00px;font-size:5.64px;color:#f6fbfa;transform:scaleX(0.950);transform-origin:0 0;-webkit-text-stroke:0.12px #f6fbfa;">0.00</div>
<div class="t" style="left:264.78px;top:91.00px;font-size:5.64px;color:#f6fbfa;transform:scaleX(0.950);transform-origin:0 0;-webkit-text-stroke:0.12px #f6fbfa;">5.00</div>
<div class="t" style="left:295.51px;top:91.00px;font-size:5.64px;color:#f6fbfa;transform:scaleX(0.950);transform-origin:0 0;-webkit-text-stroke:0.12px #f6fbfa;">1134.54</div>
<div class="t" style="left:334.78px;top:91.00px;font-size:5.64px;color:#f6fbfa;transform:scaleX(0.950);transform-origin:0 0;-webkit-text-stroke:0.12px #f6fbfa;">0.00</div>
<div class="a" style="left:358px;top:90px;width:34px;height:6px;background:#ebebeb;"></div>
<div class="t" style="left:365.51px;top:91.00px;font-size:5.64px;color:#2a8508;transform:scaleX(0.950);transform-origin:0 0;-webkit-text-stroke:0.12px #2a8508;">1134.54</div>
<div class="a" style="left:393px;top:90px;width:34px;height:6px;background:#ebebeb;"></div>
<div class="t" style="left:403.29px;top:91.00px;font-size:5.64px;color:#2a8508;transform:scaleX(0.950);transform-origin:0 0;-webkit-text-stroke:0.12px #2a8508;">35.90</div>
<div class="a" style="left:8px;top:97px;width:34px;height:8px;background:#4bbcb6;"></div>
<div class="t" style="left:11.00px;top:99.00px;font-size:5.81px;color:#f6fbfa;transform:scaleX(0.861);transform-origin:0 0;-webkit-text-stroke:0.12px #f6fbfa;">NZDUSD</div>
<div class="a" style="left:43px;top:97px;width:49px;height:8px;background:#4bbcb6;"></div>
<div class="t" style="left:54.01px;top:99.00px;font-size:5.64px;color:#f6fbfa;transform:scaleX(0.950);transform-origin:0 0;-webkit-text-stroke:0.12px #f6fbfa;">1</div>
<div class="t" style="left:67.51px;top:99.00px;font-size:5.64px;color:#109a20;transform:scaleX(0.950);transform-origin:0 0;-webkit-text-stroke:0.12px #109a20;">1</div>
<div class="t" style="left:81.01px;top:99.00px;font-size:5.64px;color:#e81c1c;transform:scaleX(0.950);transform-origin:0 0;-webkit-text-stroke:0.12px #e81c1c;">0</div>
<div class="a" style="left:93px;top:97px;width:49px;height:8px;background:#4bbcb6;"></div>
<div class="t" style="left:104.01px;top:99.00px;font-size:5.64px;color:#f6fbfa;transform:scaleX(0.950);transform-origin:0 0;-webkit-text-stroke:0.12px #f6fbfa;">0</div>
<div class="t" style="left:117.51px;top:99.00px;font-size:5.64px;color:#109a20;transform:scaleX(0.950);transform-origin:0 0;-webkit-text-stroke:0.12px #109a20;">0</div>
<div class="t" style="left:131.01px;top:99.00px;font-size:5.64px;color:#e81c1c;transform:scaleX(0.950);transform-origin:0 0;-webkit-text-stroke:0.12px #e81c1c;">0</div>
<div class="a" style="left:143px;top:97px;width:49px;height:8px;background:#4bbcb6;"></div>
<div class="t" style="left:154.01px;top:99.00px;font-size:5.64px;color:#f6fbfa;transform:scaleX(0.950);transform-origin:0 0;-webkit-text-stroke:0.12px #f6fbfa;">1</div>
<div class="t" style="left:167.51px;top:99.00px;font-size:5.64px;color:#109a20;transform:scaleX(0.950);transform-origin:0 0;-webkit-text-stroke:0.12px #109a20;">1</div>
<div class="t" style="left:181.01px;top:99.00px;font-size:5.64px;color:#e81c1c;transform:scaleX(0.950);transform-origin:0 0;-webkit-text-stroke:0.12px #e81c1c;">0</div>
<div class="a" style="left:193px;top:97px;width:24px;height:8px;background:#4bbcb6;"></div>
<div class="t" style="left:199.78px;top:99.00px;font-size:5.64px;color:#f6fbfa;transform:scaleX(0.950);transform-origin:0 0;-webkit-text-stroke:0.12px #f6fbfa;">5.00</div>
<div class="a" style="left:218px;top:97px;width:34px;height:8px;background:#4bbcb6;"></div>
<div class="t" style="left:229.78px;top:99.00px;font-size:5.64px;color:#f6fbfa;transform:scaleX(0.950);transform-origin:0 0;-webkit-text-stroke:0.12px #f6fbfa;">0.00</div>
<div class="a" style="left:253px;top:97px;width:34px;height:8px;background:#4bbcb6;"></div>
<div class="t" style="left:264.78px;top:99.00px;font-size:5.64px;color:#f6fbfa;transform:scaleX(0.950);transform-origin:0 0;-webkit-text-stroke:0.12px #f6fbfa;">5.00</div>
<div class="a" style="left:288px;top:97px;width:34px;height:8px;background:#4bbcb6;"></div>
<div class="t" style="left:296.80px;top:99.00px;font-size:5.64px;color:#f6fbfa;transform:scaleX(0.950);transform-origin:0 0;-webkit-text-stroke:0.12px #f6fbfa;">562.50</div>
<div class="a" style="left:323px;top:97px;width:34px;height:8px;background:#4bbcb6;"></div>
<div class="t" style="left:334.78px;top:99.00px;font-size:5.64px;color:#f6fbfa;transform:scaleX(0.950);transform-origin:0 0;-webkit-text-stroke:0.12px #f6fbfa;">0.00</div>
<div class="a" style="left:358px;top:97px;width:34px;height:8px;background:#ffffff;"></div>
<div class="t" style="left:366.80px;top:99.00px;font-size:5.64px;color:#2a8508;transform:scaleX(0.950);transform-origin:0 0;-webkit-text-stroke:0.12px #2a8508;">562.50</div>
<div class="a" style="left:393px;top:97px;width:34px;height:8px;background:#ffffff;"></div>
<div class="t" style="left:403.49px;top:99.00px;font-size:5.64px;color:#2a8508;transform:scaleX(0.950);transform-origin:0 0;-webkit-text-stroke:0.12px #2a8508;">11.70</div>
<div class="t" style="left:11.00px;top:107.00px;font-size:5.81px;color:#f6fbfa;transform:scaleX(0.861);transform-origin:0 0;-webkit-text-stroke:0.12px #f6fbfa;">AUDNZD</div>
<div class="t" style="left:54.01px;top:107.00px;font-size:5.64px;color:#f6fbfa;transform:scaleX(0.950);transform-origin:0 0;-webkit-text-stroke:0.12px #f6fbfa;">2</div>
<div class="t" style="left:67.51px;top:107.00px;font-size:5.64px;color:#109a20;transform:scaleX(0.950);transform-origin:0 0;-webkit-text-stroke:0.12px #109a20;">0</div>
<div class="t" style="left:81.01px;top:107.00px;font-size:5.64px;color:#e81c1c;transform:scaleX(0.950);transform-origin:0 0;-webkit-text-stroke:0.12px #e81c1c;">2</div>
<div class="t" style="left:104.01px;top:107.00px;font-size:5.64px;color:#f6fbfa;transform:scaleX(0.950);transform-origin:0 0;-webkit-text-stroke:0.12px #f6fbfa;">1</div>
<div class="t" style="left:117.51px;top:107.00px;font-size:5.64px;color:#109a20;transform:scaleX(0.950);transform-origin:0 0;-webkit-text-stroke:0.12px #109a20;">0</div>
<div class="t" style="left:131.01px;top:107.00px;font-size:5.64px;color:#e81c1c;transform:scaleX(0.950);transform-origin:0 0;-webkit-text-stroke:0.12px #e81c1c;">1</div>
<div class="t" style="left:154.01px;top:107.00px;font-size:5.64px;color:#f6fbfa;transform:scaleX(0.950);transform-origin:0 0;-webkit-text-stroke:0.12px #f6fbfa;">1</div>
<div class="t" style="left:167.51px;top:107.00px;font-size:5.64px;color:#109a20;transform:scaleX(0.950);transform-origin:0 0;-webkit-text-stroke:0.12px #109a20;">0</div>
<div class="t" style="left:181.01px;top:107.00px;font-size:5.64px;color:#e81c1c;transform:scaleX(0.950);transform-origin:0 0;-webkit-text-stroke:0.12px #e81c1c;">1</div>
<div class="t" style="left:199.78px;top:107.00px;font-size:5.64px;color:#f6fbfa;transform:scaleX(0.950);transform-origin:0 0;-webkit-text-stroke:0.12px #f6fbfa;">7.50</div>
<div class="t" style="left:229.78px;top:107.00px;font-size:5.64px;color:#f6fbfa;transform:scaleX(0.950);transform-origin:0 0;-webkit-text-stroke:0.12px #f6fbfa;">5.00</div>
<div class="t" style="left:264.78px;top:107.00px;font-size:5.64px;color:#f6fbfa;transform:scaleX(0.950);transform-origin:0 0;-webkit-text-stroke:0.12px #f6fbfa;">2.50</div>
<div class="t" style="left:299.78px;top:107.00px;font-size:5.64px;color:#f6fbfa;transform:scaleX(0.950);transform-origin:0 0;-webkit-text-stroke:0.12px #f6fbfa;">0.00</div>
<div class="t" style="left:330.91px;top:107.00px;font-size:5.64px;color:#f6fbfa;transform:scaleX(0.950);transform-origin:0 0;-webkit-text-stroke:0.12px #f6fbfa;">-373.73</div>
<div class="a" style="left:358px;top:106px;width:34px;height:6px;background:#ebebeb;"></div>
<div class="t" style="left:365.91px;top:107.00px;font-size:5.64px;color:#f01818;transform:scaleX(0.950);transform-origin:0 0;-webkit-text-stroke:0.12px #f01818;">-373.73</div>
<div class="a" style="left:393px;top:106px;width:34px;height:6px;background:#ebebeb;"></div>
<div class="t" style="left:402.40px;top:107.00px;font-size:5.64px;color:#f01818;transform:scaleX(0.950);transform-origin:0 0;-webkit-text-stroke:0.12px #f01818;">-12.40</div>
<div class="a" style="left:8px;top:113px;width:34px;height:7px;background:#4bbcb6;"></div>
<div class="t" style="left:11.00px;top:115.00px;font-size:5.81px;color:#f6fbfa;transform:scaleX(0.861);transform-origin:0 0;-webkit-text-stroke:0.12px #f6fbfa;">CADCHF</div>
<div class="a" style="left:43px;top:113px;width:49px;height:7px;background:#4bbcb6;"></div>
<div class="t" style="left:54.01px;top:115.00px;font-size:5.64px;color:#f6fbfa;transform:scaleX(0.950);transform-origin:0 0;-webkit-text-stroke:0.12px #f6fbfa;">2</div>
<div class="t" style="left:67.51px;top:115.00px;font-size:5.64px;color:#109a20;transform:scaleX(0.950);transform-origin:0 0;-webkit-text-stroke:0.12px #109a20;">1</div>
<div class="t" style="left:81.01px;top:115.00px;font-size:5.64px;color:#e81c1c;transform:scaleX(0.950);transform-origin:0 0;-webkit-text-stroke:0.12px #e81c1c;">1</div>
<div class="a" style="left:93px;top:113px;width:49px;height:7px;background:#4bbcb6;"></div>
<div class="t" style="left:104.01px;top:115.00px;font-size:5.64px;color:#f6fbfa;transform:scaleX(0.950);transform-origin:0 0;-webkit-text-stroke:0.12px #f6fbfa;">1</div>
<div class="t" style="left:117.51px;top:115.00px;font-size:5.64px;color:#109a20;transform:scaleX(0.950);transform-origin:0 0;-webkit-text-stroke:0.12px #109a20;">1</div>
<div class="t" style="left:131.01px;top:115.00px;font-size:5.64px;color:#e81c1c;transform:scaleX(0.950);transform-origin:0 0;-webkit-text-stroke:0.12px #e81c1c;">0</div>
<div class="a" style="left:143px;top:113px;width:49px;height:7px;background:#4bbcb6;"></div>
<div class="t" style="left:154.01px;top:115.00px;font-size:5.64px;color:#f6fbfa;transform:scaleX(0.950);transform-origin:0 0;-webkit-text-stroke:0.12px #f6fbfa;">1</div>
<div class="t" style="left:167.51px;top:115.00px;font-size:5.64px;color:#109a20;transform:scaleX(0.950);transform-origin:0 0;-webkit-text-stroke:0.12px #109a20;">0</div>
<div class="t" style="left:181.01px;top:115.00px;font-size:5.64px;color:#e81c1c;transform:scaleX(0.950);transform-origin:0 0;-webkit-text-stroke:0.12px #e81c1c;">1</div>
<div class="a" style="left:193px;top:113px;width:24px;height:7px;background:#4bbcb6;"></div>
<div class="t" style="left:198.29px;top:115.00px;font-size:5.64px;color:#f6fbfa;transform:scaleX(0.950);transform-origin:0 0;-webkit-text-stroke:0.12px #f6fbfa;">10.00</div>
<div class="a" style="left:218px;top:113px;width:34px;height:7px;background:#4bbcb6;"></div>
<div class="t" style="left:229.78px;top:115.00px;font-size:5.64px;color:#f6fbfa;transform:scaleX(0.950);transform-origin:0 0;-webkit-text-stroke:0.12px #f6fbfa;">5.00</div>
<div class="a" style="left:253px;top:113px;width:34px;height:7px;background:#4bbcb6;"></div>
<div class="t" style="left:264.78px;top:115.00px;font-size:5.64px;color:#f6fbfa;transform:scaleX(0.950);transform-origin:0 0;-webkit-text-stroke:0.12px #f6fbfa;">5.00</div>
<div class="a" style="left:288px;top:113px;width:34px;height:7px;background:#4bbcb6;"></div>
<div class="t" style="left:296.80px;top:115.00px;font-size:5.64px;color:#f6fbfa;transform:scaleX(0.950);transform-origin:0 0;-webkit-text-stroke:0.12px #f6fbfa;">945.33</div>
<div class="a" style="left:323px;top:113px;width:34px;height:7px;background:#4bbcb6;"></div>
<div class="t" style="left:329.42px;top:115.00px;font-size:5.64px;color:#f6fbfa;transform:scaleX(0.950);transform-origin:0 0;-webkit-text-stroke:0.12px #f6fbfa;">-1464.61</div>
<div class="a" style="left:358px;top:113px;width:34px;height:7px;background:#ffffff;"></div>
<div class="t" style="left:365.91px;top:115.00px;font-size:5.64px;color:#f01818;transform:scaleX(0.950);transform-origin:0 0;-webkit-text-stroke:0.12px #f01818;">-519.28</div>
<div class="a" style="left:393px;top:113px;width:34px;height:7px;background:#ffffff;"></div>
<div class="t" style="left:403.89px;top:115.00px;font-size:5.64px;color:#f01818;transform:scaleX(0.950);transform-origin:0 0;-webkit-text-stroke:0.12px #f01818;">-9.80</div>
<div class="t" style="left:11.00px;top:122.00px;font-size:5.81px;color:#f6fbfa;transform:scaleX(0.861);transform-origin:0 0;-webkit-text-stroke:0.12px #f6fbfa;">GBPCHF</div>
<div class="t" style="left:54.01px;top:122.00px;font-size:5.64px;color:#f6fbfa;transform:scaleX(0.950);transform-origin:0 0;-webkit-text-stroke:0.12px #f6fbfa;">3</div>
<div class="t" style="left:67.51px;top:122.00px;font-size:5.64px;color:#109a20;transform:scaleX(0.950);transform-origin:0 0;-webkit-text-stroke:0.12px #109a20;">2</div>
<div class="t" style="left:81.01px;top:122.00px;font-size:5.64px;color:#e81c1c;transform:scaleX(0.950);transform-origin:0 0;-webkit-text-stroke:0.12px #e81c1c;">1</div>
<div class="t" style="left:104.01px;top:122.00px;font-size:5.64px;color:#f6fbfa;transform:scaleX(0.950);transform-origin:0 0;-webkit-text-stroke:0.12px #f6fbfa;">0</div>
<div class="t" style="left:117.51px;top:122.00px;font-size:5.64px;color:#109a20;transform:scaleX(0.950);transform-origin:0 0;-webkit-text-stroke:0.12px #109a20;">0</div>
<div class="t" style="left:131.01px;top:122.00px;font-size:5.64px;color:#e81c1c;transform:scaleX(0.950);transform-origin:0 0;-webkit-text-stroke:0.12px #e81c1c;">0</div>
<div class="t" style="left:154.01px;top:122.00px;font-size:5.64px;color:#f6fbfa;transform:scaleX(0.950);transform-origin:0 0;-webkit-text-stroke:0.12px #f6fbfa;">3</div>
<div class="t" style="left:167.51px;top:122.00px;font-size:5.64px;color:#109a20;transform:scaleX(0.950);transform-origin:0 0;-webkit-text-stroke:0.12px #109a20;">2</div>
<div class="t" style="left:181.01px;top:122.00px;font-size:5.64px;color:#e81c1c;transform:scaleX(0.950);transform-origin:0 0;-webkit-text-stroke:0.12px #e81c1c;">1</div>
<div class="t" style="left:198.29px;top:122.00px;font-size:5.64px;color:#f6fbfa;transform:scaleX(0.950);transform-origin:0 0;-webkit-text-stroke:0.12px #f6fbfa;">15.00</div>
<div class="t" style="left:229.78px;top:122.00px;font-size:5.64px;color:#f6fbfa;transform:scaleX(0.950);transform-origin:0 0;-webkit-text-stroke:0.12px #f6fbfa;">0.00</div>
<div class="t" style="left:263.29px;top:122.00px;font-size:5.64px;color:#f6fbfa;transform:scaleX(0.950);transform-origin:0 0;-webkit-text-stroke:0.12px #f6fbfa;">15.00</div>
<div class="t" style="left:296.80px;top:122.00px;font-size:5.64px;color:#f6fbfa;transform:scaleX(0.950);transform-origin:0 0;-webkit-text-stroke:0.12px #f6fbfa;">692.05</div>
<div class="t" style="left:330.91px;top:122.00px;font-size:5.64px;color:#f6fbfa;transform:scaleX(0.950);transform-origin:0 0;-webkit-text-stroke:0.12px #f6fbfa;">-410.76</div>
<div class="a" style="left:358px;top:121px;width:34px;height:6px;background:#ebebeb;"></div>
<div class="t" style="left:366.80px;top:122.00px;font-size:5.64px;color:#2a8508;transform:scaleX(0.950);transform-origin:0 0;-webkit-text-stroke:0.12px #2a8508;">281.29</div>
<div class="a" style="left:393px;top:121px;width:34px;height:6px;background:#ebebeb;"></div>
<div class="t" style="left:404.78px;top:122.00px;font-size:5.64px;color:#2a8508;transform:scaleX(0.950);transform-origin:0 0;-webkit-text-stroke:0.12px #2a8508;">7.00</div>
<div class="a" style="left:8px;top:128px;width:34px;height:7px;background:#4bbcb6;"></div>
<div class="t" style="left:11.00px;top:130.00px;font-size:5.81px;color:#f6fbfa;transform:scaleX(0.861);transform-origin:0 0;-webkit-text-stroke:0.12px #f6fbfa;">EURJPY</div>
<div class="a" style="left:43px;top:128px;width:49px;height:7px;background:#4bbcb6;"></div>
<div class="t" style="left:54.01px;top:130.00px;font-size:5.64px;color:#f6fbfa;transform:scaleX(0.950);transform-origin:0 0;-webkit-text-stroke:0.12px #f6fbfa;">4</div>
<div class="t" style="left:67.51px;top:130.00px;font-size:5.64px;color:#109a20;transform:scaleX(0.950);transform-origin:0 0;-webkit-text-stroke:0.12px #109a20;">2</div>
<div class="t" style="left:81.01px;top:130.00px;font-size:5.64px;color:#e81c1c;transform:scaleX(0.950);transform-origin:0 0;-webkit-text-stroke:0.12px #e81c1c;">2</div>
<div class="a" style="left:93px;top:128px;width:49px;height:7px;background:#4bbcb6;"></div>
<div class="t" style="left:104.01px;top:130.00px;font-size:5.64px;color:#f6fbfa;transform:scaleX(0.950);transform-origin:0 0;-webkit-text-stroke:0.12px #f6fbfa;">3</div>
<div class="t" style="left:117.51px;top:130.00px;font-size:5.64px;color:#109a20;transform:scaleX(0.950);transform-origin:0 0;-webkit-text-stroke:0.12px #109a20;">1</div>
<div class="t" style="left:131.01px;top:130.00px;font-size:5.64px;color:#e81c1c;transform:scaleX(0.950);transform-origin:0 0;-webkit-text-stroke:0.12px #e81c1c;">2</div>
<div class="a" style="left:143px;top:128px;width:49px;height:7px;background:#4bbcb6;"></div>
<div class="t" style="left:154.01px;top:130.00px;font-size:5.64px;color:#f6fbfa;transform:scaleX(0.950);transform-origin:0 0;-webkit-text-stroke:0.12px #f6fbfa;">1</div>
<div class="t" style="left:167.51px;top:130.00px;font-size:5.64px;color:#109a20;transform:scaleX(0.950);transform-origin:0 0;-webkit-text-stroke:0.12px #109a20;">1</div>
<div class="t" style="left:181.01px;top:130.00px;font-size:5.64px;color:#e81c1c;transform:scaleX(0.950);transform-origin:0 0;-webkit-text-stroke:0.12px #e81c1c;">0</div>
<div class="a" style="left:193px;top:128px;width:24px;height:7px;background:#4bbcb6;"></div>
<div class="t" style="left:198.29px;top:130.00px;font-size:5.64px;color:#f6fbfa;transform:scaleX(0.950);transform-origin:0 0;-webkit-text-stroke:0.12px #f6fbfa;">20.00</div>
<div class="a" style="left:218px;top:128px;width:34px;height:7px;background:#4bbcb6;"></div>
<div class="t" style="left:228.29px;top:130.00px;font-size:5.64px;color:#f6fbfa;transform:scaleX(0.950);transform-origin:0 0;-webkit-text-stroke:0.12px #f6fbfa;">15.00</div>
<div class="a" style="left:253px;top:128px;width:34px;height:7px;background:#4bbcb6;"></div>
<div class="t" style="left:264.78px;top:130.00px;font-size:5.64px;color:#f6fbfa;transform:scaleX(0.950);transform-origin:0 0;-webkit-text-stroke:0.12px #f6fbfa;">5.00</div>
<div class="a" style="left:288px;top:128px;width:34px;height:7px;background:#4bbcb6;"></div>
<div class="t" style="left:295.31px;top:130.00px;font-size:5.64px;color:#f6fbfa;transform:scaleX(0.950);transform-origin:0 0;-webkit-text-stroke:0.12px #f6fbfa;">3104.81</div>
<div class="a" style="left:323px;top:128px;width:34px;height:7px;background:#4bbcb6;"></div>
<div class="t" style="left:329.42px;top:130.00px;font-size:5.64px;color:#f6fbfa;transform:scaleX(0.950);transform-origin:0 0;-webkit-text-stroke:0.12px #f6fbfa;">-2034.12</div>
<div class="a" style="left:358px;top:128px;width:34px;height:7px;background:#ffffff;"></div>
<div class="t" style="left:365.31px;top:130.00px;font-size:5.64px;color:#2a8508;transform:scaleX(0.950);transform-origin:0 0;-webkit-text-stroke:0.12px #2a8508;">1070.69</div>
<div class="a" style="left:393px;top:128px;width:34px;height:7px;background:#ffffff;"></div>
<div class="t" style="left:403.29px;top:130.00px;font-size:5.64px;color:#2a8508;transform:scaleX(0.950);transform-origin:0 0;-webkit-text-stroke:0.12px #2a8508;">34.60</div>
<div class="t" style="left:11.00px;top:137.00px;font-size:5.81px;color:#f6fbfa;transform:scaleX(0.861);transform-origin:0 0;-webkit-text-stroke:0.12px #f6fbfa;">NZDCHF</div>
<div class="t" style="left:54.01px;top:137.00px;font-size:5.64px;color:#f6fbfa;transform:scaleX(0.950);transform-origin:0 0;-webkit-text-stroke:0.12px #f6fbfa;">4</div>
<div class="t" style="left:67.51px;top:137.00px;font-size:5.64px;color:#109a20;transform:scaleX(0.950);transform-origin:0 0;-webkit-text-stroke:0.12px #109a20;">1</div>
<div class="t" style="left:81.01px;top:137.00px;font-size:5.64px;color:#e81c1c;transform:scaleX(0.950);transform-origin:0 0;-webkit-text-stroke:0.12px #e81c1c;">3</div>
<div class="t" style="left:104.01px;top:137.00px;font-size:5.64px;color:#f6fbfa;transform:scaleX(0.950);transform-origin:0 0;-webkit-text-stroke:0.12px #f6fbfa;">2</div>
<div class="t" style="left:117.51px;top:137.00px;font-size:5.64px;color:#109a20;transform:scaleX(0.950);transform-origin:0 0;-webkit-text-stroke:0.12px #109a20;">1</div>
<div class="t" style="left:131.01px;top:137.00px;font-size:5.64px;color:#e81c1c;transform:scaleX(0.950);transform-origin:0 0;-webkit-text-stroke:0.12px #e81c1c;">1</div>
<div class="t" style="left:154.01px;top:137.00px;font-size:5.64px;color:#f6fbfa;transform:scaleX(0.950);transform-origin:0 0;-webkit-text-stroke:0.12px #f6fbfa;">2</div>
<div class="t" style="left:167.51px;top:137.00px;font-size:5.64px;color:#109a20;transform:scaleX(0.950);transform-origin:0 0;-webkit-text-stroke:0.12px #109a20;">0</div>
<div class="t" style="left:181.01px;top:137.00px;font-size:5.64px;color:#e81c1c;transform:scaleX(0.950);transform-origin:0 0;-webkit-text-stroke:0.12px #e81c1c;">2</div>
<div class="t" style="left:198.29px;top:137.00px;font-size:5.64px;color:#f6fbfa;transform:scaleX(0.950);transform-origin:0 0;-webkit-text-stroke:0.12px #f6fbfa;">20.00</div>
<div class="t" style="left:228.29px;top:137.00px;font-size:5.64px;color:#f6fbfa;transform:scaleX(0.950);transform-origin:0 0;-webkit-text-stroke:0.12px #f6fbfa;">10.00</div>
<div class="t" style="left:263.29px;top:137.00px;font-size:5.64px;color:#f6fbfa;transform:scaleX(0.950);transform-origin:0 0;-webkit-text-stroke:0.12px #f6fbfa;">10.00</div>
<div class="t" style="left:296.80px;top:137.00px;font-size:5.64px;color:#f6fbfa;transform:scaleX(0.950);transform-origin:0 0;-webkit-text-stroke:0.12px #f6fbfa;">127.58</div>
<div class="t" style="left:329.42px;top:137.00px;font-size:5.64px;color:#f6fbfa;transform:scaleX(0.950);transform-origin:0 0;-webkit-text-stroke:0.12px #f6fbfa;">-2747.91</div>
<div class="a" style="left:358px;top:136px;width:34px;height:7px;background:#ebebeb;"></div>
<div class="t" style="left:364.42px;top:137.00px;font-size:5.64px;color:#f01818;transform:scaleX(0.950);transform-origin:0 0;-webkit-text-stroke:0.12px #f01818;">-2620.33</div>
<div class="a" style="left:393px;top:136px;width:34px;height:7px;background:#ebebeb;"></div>
<div class="t" style="left:402.40px;top:137.00px;font-size:5.64px;color:#f01818;transform:scaleX(0.950);transform-origin:0 0;-webkit-text-stroke:0.12px #f01818;">-49.90</div>
<div class="a" style="left:8px;top:144px;width:34px;height:7px;background:#4bbcb6;"></div>
<div class="t" style="left:11.00px;top:146.00px;font-size:5.81px;color:#f6fbfa;transform:scaleX(0.861);transform-origin:0 0;-webkit-text-stroke:0.12px #f6fbfa;">AUDUSD</div>
<div class="a" style="left:43px;top:144px;width:49px;height:7px;background:#4bbcb6;"></div>
<div class="t" style="left:54.01px;top:146.00px;font-size:5.64px;color:#f6fbfa;transform:scaleX(0.950);transform-origin:0 0;-webkit-text-stroke:0.12px #f6fbfa;">5</div>
<div class="t" style="left:67.51px;top:146.00px;font-size:5.64px;color:#109a20;transform:scaleX(0.950);transform-origin:0 0;-webkit-text-stroke:0.12px #109a20;">5</div>
<div class="t" style="left:81.01px;top:146.00px;font-size:5.64px;color:#e81c1c;transform:scaleX(0.950);transform-origin:0 0;-webkit-text-stroke:0.12px #e81c1c;">0</div>
<div class="a" style="left:93px;top:144px;width:49px;height:7px;background:#4bbcb6;"></div>
<div class="t" style="left:104.01px;top:146.00px;font-size:5.64px;color:#f6fbfa;transform:scaleX(0.950);transform-origin:0 0;-webkit-text-stroke:0.12px #f6fbfa;">4</div>
<div class="t" style="left:117.51px;top:146.00px;font-size:5.64px;color:#109a20;transform:scaleX(0.950);transform-origin:0 0;-webkit-text-stroke:0.12px #109a20;">4</div>
<div class="t" style="left:131.01px;top:146.00px;font-size:5.64px;color:#e81c1c;transform:scaleX(0.950);transform-origin:0 0;-webkit-text-stroke:0.12px #e81c1c;">0</div>
<div class="a" style="left:143px;top:144px;width:49px;height:7px;background:#4bbcb6;"></div>
<div class="t" style="left:154.01px;top:146.00px;font-size:5.64px;color:#f6fbfa;transform:scaleX(0.950);transform-origin:0 0;-webkit-text-stroke:0.12px #f6fbfa;">1</div>
<div class="t" style="left:167.51px;top:146.00px;font-size:5.64px;color:#109a20;transform:scaleX(0.950);transform-origin:0 0;-webkit-text-stroke:0.12px #109a20;">1</div>
<div class="t" style="left:181.01px;top:146.00px;font-size:5.64px;color:#e81c1c;transform:scaleX(0.950);transform-origin:0 0;-webkit-text-stroke:0.12px #e81c1c;">0</div>
<div class="a" style="left:193px;top:144px;width:24px;height:7px;background:#4bbcb6;"></div>
<div class="t" style="left:198.29px;top:146.00px;font-size:5.64px;color:#f6fbfa;transform:scaleX(0.950);transform-origin:0 0;-webkit-text-stroke:0.12px #f6fbfa;">25.00</div>
<div class="a" style="left:218px;top:144px;width:34px;height:7px;background:#4bbcb6;"></div>
<div class="t" style="left:228.29px;top:146.00px;font-size:5.64px;color:#f6fbfa;transform:scaleX(0.950);transform-origin:0 0;-webkit-text-stroke:0.12px #f6fbfa;">20.00</div>
<div class="a" style="left:253px;top:144px;width:34px;height:7px;background:#4bbcb6;"></div>
<div class="t" style="left:264.78px;top:146.00px;font-size:5.64px;color:#f6fbfa;transform:scaleX(0.950);transform-origin:0 0;-webkit-text-stroke:0.12px #f6fbfa;">5.00</div>
<div class="a" style="left:288px;top:144px;width:34px;height:7px;background:#4bbcb6;"></div>
<div class="t" style="left:295.31px;top:146.00px;font-size:5.64px;color:#f6fbfa;transform:scaleX(0.950);transform-origin:0 0;-webkit-text-stroke:0.12px #f6fbfa;">7722.70</div>
<div class="a" style="left:323px;top:144px;width:34px;height:7px;background:#4bbcb6;"></div>
<div class="t" style="left:334.78px;top:146.00px;font-size:5.64px;color:#f6fbfa;transform:scaleX(0.950);transform-origin:0 0;-webkit-text-stroke:0.12px #f6fbfa;">0.00</div>
<div class="a" style="left:358px;top:144px;width:34px;height:7px;background:#ffffff;"></div>
<div class="t" style="left:365.31px;top:146.00px;font-size:5.64px;color:#2a8508;transform:scaleX(0.950);transform-origin:0 0;-webkit-text-stroke:0.12px #2a8508;">7722.70</div>
<div class="a" style="left:393px;top:144px;width:34px;height:7px;background:#ffffff;"></div>
<div class="t" style="left:401.80px;top:146.00px;font-size:5.64px;color:#2a8508;transform:scaleX(0.950);transform-origin:0 0;-webkit-text-stroke:0.12px #2a8508;">157.60</div>
<div class="t" style="left:11.00px;top:153.00px;font-size:5.81px;color:#f6fbfa;transform:scaleX(0.861);transform-origin:0 0;-webkit-text-stroke:0.12px #f6fbfa;">USDCHF</div>
<div class="t" style="left:52.72px;top:153.00px;font-size:5.64px;color:#f6fbfa;transform:scaleX(0.950);transform-origin:0 0;-webkit-text-stroke:0.12px #f6fbfa;">11</div>
<div class="t" style="left:67.51px;top:153.00px;font-size:5.64px;color:#109a20;transform:scaleX(0.950);transform-origin:0 0;-webkit-text-stroke:0.12px #109a20;">9</div>
<div class="t" style="left:81.01px;top:153.00px;font-size:5.64px;color:#e81c1c;transform:scaleX(0.950);transform-origin:0 0;-webkit-text-stroke:0.12px #e81c1c;">2</div>
<div class="t" style="left:104.01px;top:153.00px;font-size:5.64px;color:#f6fbfa;transform:scaleX(0.950);transform-origin:0 0;-webkit-text-stroke:0.12px #f6fbfa;">2</div>
<div class="t" style="left:117.51px;top:153.00px;font-size:5.64px;color:#109a20;transform:scaleX(0.950);transform-origin:0 0;-webkit-text-stroke:0.12px #109a20;">1</div>
<div class="t" style="left:131.01px;top:153.00px;font-size:5.64px;color:#e81c1c;transform:scaleX(0.950);transform-origin:0 0;-webkit-text-stroke:0.12px #e81c1c;">1</div>
<div class="t" style="left:154.01px;top:153.00px;font-size:5.64px;color:#f6fbfa;transform:scaleX(0.950);transform-origin:0 0;-webkit-text-stroke:0.12px #f6fbfa;">9</div>
<div class="t" style="left:167.51px;top:153.00px;font-size:5.64px;color:#109a20;transform:scaleX(0.950);transform-origin:0 0;-webkit-text-stroke:0.12px #109a20;">8</div>
<div class="t" style="left:181.01px;top:153.00px;font-size:5.64px;color:#e81c1c;transform:scaleX(0.950);transform-origin:0 0;-webkit-text-stroke:0.12px #e81c1c;">1</div>
<div class="t" style="left:198.29px;top:153.00px;font-size:5.64px;color:#f6fbfa;transform:scaleX(0.950);transform-origin:0 0;-webkit-text-stroke:0.12px #f6fbfa;">55.00</div>
<div class="t" style="left:228.29px;top:153.00px;font-size:5.64px;color:#f6fbfa;transform:scaleX(0.950);transform-origin:0 0;-webkit-text-stroke:0.12px #f6fbfa;">10.00</div>
<div class="t" style="left:263.29px;top:153.00px;font-size:5.64px;color:#f6fbfa;transform:scaleX(0.950);transform-origin:0 0;-webkit-text-stroke:0.12px #f6fbfa;">45.00</div>
<div class="t" style="left:295.31px;top:153.00px;font-size:5.64px;color:#f6fbfa;transform:scaleX(0.950);transform-origin:0 0;-webkit-text-stroke:0.12px #f6fbfa;">7202.15</div>
<div class="t" style="left:332.40px;top:153.00px;font-size:5.64px;color:#f6fbfa;transform:scaleX(0.950);transform-origin:0 0;-webkit-text-stroke:0.12px #f6fbfa;">-60.04</div>
<div class="a" style="left:358px;top:152px;width:34px;height:6px;background:#ebebeb;"></div>
<div class="t" style="left:365.51px;top:153.00px;font-size:5.64px;color:#2a8508;transform:scaleX(0.950);transform-origin:0 0;-webkit-text-stroke:0.12px #2a8508;">7142.11</div>
<div class="a" style="left:393px;top:152px;width:34px;height:6px;background:#ebebeb;"></div>
<div class="t" style="left:401.80px;top:153.00px;font-size:5.64px;color:#2a8508;transform:scaleX(0.950);transform-origin:0 0;-webkit-text-stroke:0.12px #2a8508;">149.40</div>
<div class="a" style="left:8px;top:159px;width:34px;height:7px;background:#4bbcb6;"></div>
<div class="t" style="left:11.00px;top:160.00px;font-size:5.81px;color:#f6fbfa;transform:scaleX(0.861);transform-origin:0 0;-webkit-text-stroke:0.12px #f6fbfa;">USDCAD</div>
<div class="a" style="left:43px;top:159px;width:49px;height:7px;background:#4bbcb6;"></div>
<div class="t" style="left:52.52px;top:160.00px;font-size:5.64px;color:#f6fbfa;transform:scaleX(0.950);transform-origin:0 0;-webkit-text-stroke:0.12px #f6fbfa;">13</div>
<div class="t" style="left:66.22px;top:160.00px;font-size:5.64px;color:#109a20;transform:scaleX(0.950);transform-origin:0 0;-webkit-text-stroke:0.12px #109a20;">11</div>
<div class="t" style="left:81.01px;top:160.00px;font-size:5.64px;color:#e81c1c;transform:scaleX(0.950);transform-origin:0 0;-webkit-text-stroke:0.12px #e81c1c;">2</div>
<div class="a" style="left:93px;top:159px;width:49px;height:7px;background:#4bbcb6;"></div>
<div class="t" style="left:104.01px;top:160.00px;font-size:5.64px;color:#f6fbfa;transform:scaleX(0.950);transform-origin:0 0;-webkit-text-stroke:0.12px #f6fbfa;">9</div>
<div class="t" style="left:117.51px;top:160.00px;font-size:5.64px;color:#109a20;transform:scaleX(0.950);transform-origin:0 0;-webkit-text-stroke:0.12px #109a20;">8</div>
<div class="t" style="left:131.01px;top:160.00px;font-size:5.64px;color:#e81c1c;transform:scaleX(0.950);transform-origin:0 0;-webkit-text-stroke:0.12px #e81c1c;">1</div>
<div class="a" style="left:143px;top:159px;width:49px;height:7px;background:#4bbcb6;"></div>
<div class="t" style="left:154.01px;top:160.00px;font-size:5.64px;color:#f6fbfa;transform:scaleX(0.950);transform-origin:0 0;-webkit-text-stroke:0.12px #f6fbfa;">4</div>
<div class="t" style="left:167.51px;top:160.00px;font-size:5.64px;color:#109a20;transform:scaleX(0.950);transform-origin:0 0;-webkit-text-stroke:0.12px #109a20;">3</div>
<div class="t" style="left:181.01px;top:160.00px;font-size:5.64px;color:#e81c1c;transform:scaleX(0.950);transform-origin:0 0;-webkit-text-stroke:0.12px #e81c1c;">1</div>
<div class="a" style="left:193px;top:159px;width:24px;height:7px;background:#4bbcb6;"></div>
<div class="t" style="left:198.29px;top:160.00px;font-size:5.64px;color:#f6fbfa;transform:scaleX(0.950);transform-origin:0 0;-webkit-text-stroke:0.12px #f6fbfa;">65.00</div>
<div class="a" style="left:218px;top:159px;width:34px;height:7px;background:#4bbcb6;"></div>
<div class="t" style="left:228.29px;top:160.00px;font-size:5.64px;color:#f6fbfa;transform:scaleX(0.950);transform-origin:0 0;-webkit-text-stroke:0.12px #f6fbfa;">45.00</div>
<div class="a" style="left:253px;top:159px;width:34px;height:7px;background:#4bbcb6;"></div>
<div class="t" style="left:263.29px;top:160.00px;font-size:5.64px;color:#f6fbfa;transform:scaleX(0.950);transform-origin:0 0;-webkit-text-stroke:0.12px #f6fbfa;">20.00</div>
<div class="a" style="left:288px;top:159px;width:34px;height:7px;background:#4bbcb6;"></div>
<div class="t" style="left:293.82px;top:160.00px;font-size:5.64px;color:#f6fbfa;transform:scaleX(0.950);transform-origin:0 0;-webkit-text-stroke:0.12px #f6fbfa;">12824.87</div>
<div class="a" style="left:323px;top:159px;width:34px;height:7px;background:#4bbcb6;"></div>
<div class="t" style="left:329.42px;top:160.00px;font-size:5.64px;color:#f6fbfa;transform:scaleX(0.950);transform-origin:0 0;-webkit-text-stroke:0.12px #f6fbfa;">-2025.29</div>
<div class="a" style="left:358px;top:159px;width:34px;height:7px;background:#ffffff;"></div>
<div class="t" style="left:363.82px;top:160.00px;font-size:5.64px;color:#2a8508;transform:scaleX(0.950);transform-origin:0 0;-webkit-text-stroke:0.12px #2a8508;">10799.58</div>
<div class="a" style="left:393px;top:159px;width:34px;height:7px;background:#ffffff;"></div>
<div class="t" style="left:401.80px;top:160.00px;font-size:5.64px;color:#2a8508;transform:scaleX(0.950);transform-origin:0 0;-webkit-text-stroke:0.12px #2a8508;">301.90</div>
<div class="t" style="left:11.00px;top:168.00px;font-size:5.81px;color:#f6fbfa;transform:scaleX(0.861);transform-origin:0 0;-webkit-text-stroke:0.12px #f6fbfa;">CADJPY</div>
<div class="t" style="left:52.52px;top:168.00px;font-size:5.64px;color:#f6fbfa;transform:scaleX(0.950);transform-origin:0 0;-webkit-text-stroke:0.12px #f6fbfa;">16</div>
<div class="t" style="left:67.51px;top:168.00px;font-size:5.64px;color:#109a20;transform:scaleX(0.950);transform-origin:0 0;-webkit-text-stroke:0.12px #109a20;">8</div>
<div class="t" style="left:81.01px;top:168.00px;font-size:5.64px;color:#e81c1c;transform:scaleX(0.950);transform-origin:0 0;-webkit-text-stroke:0.12px #e81c1c;">8</div>
<div class="t" style="left:104.01px;top:168.00px;font-size:5.64px;color:#f6fbfa;transform:scaleX(0.950);transform-origin:0 0;-webkit-text-stroke:0.12px #f6fbfa;">1</div>
<div class="t" style="left:117.51px;top:168.00px;font-size:5.64px;color:#109a20;transform:scaleX(0.950);transform-origin:0 0;-webkit-text-stroke:0.12px #109a20;">0</div>
<div class="t" style="left:131.01px;top:168.00px;font-size:5.64px;color:#e81c1c;transform:scaleX(0.950);transform-origin:0 0;-webkit-text-stroke:0.12px #e81c1c;">1</div>
<div class="t" style="left:152.52px;top:168.00px;font-size:5.64px;color:#f6fbfa;transform:scaleX(0.950);transform-origin:0 0;-webkit-text-stroke:0.12px #f6fbfa;">15</div>
<div class="t" style="left:167.51px;top:168.00px;font-size:5.64px;color:#109a20;transform:scaleX(0.950);transform-origin:0 0;-webkit-text-stroke:0.12px #109a20;">8</div>
<div class="t" style="left:181.01px;top:168.00px;font-size:5.64px;color:#e81c1c;transform:scaleX(0.950);transform-origin:0 0;-webkit-text-stroke:0.12px #e81c1c;">7</div>
<div class="t" style="left:198.29px;top:168.00px;font-size:5.64px;color:#f6fbfa;transform:scaleX(0.950);transform-origin:0 0;-webkit-text-stroke:0.12px #f6fbfa;">80.00</div>
<div class="t" style="left:229.78px;top:168.00px;font-size:5.64px;color:#f6fbfa;transform:scaleX(0.950);transform-origin:0 0;-webkit-text-stroke:0.12px #f6fbfa;">5.00</div>
<div class="t" style="left:263.29px;top:168.00px;font-size:5.64px;color:#f6fbfa;transform:scaleX(0.950);transform-origin:0 0;-webkit-text-stroke:0.12px #f6fbfa;">75.00</div>
<div class="t" style="left:295.31px;top:168.00px;font-size:5.64px;color:#f6fbfa;transform:scaleX(0.950);transform-origin:0 0;-webkit-text-stroke:0.12px #f6fbfa;">5729.01</div>
<div class="t" style="left:329.42px;top:168.00px;font-size:5.64px;color:#f6fbfa;transform:scaleX(0.950);transform-origin:0 0;-webkit-text-stroke:0.12px #f6fbfa;">-8977.97</div>
<div class="a" style="left:358px;top:167px;width:34px;height:6px;background:#ebebeb;"></div>
<div class="t" style="left:364.42px;top:168.00px;font-size:5.64px;color:#f01818;transform:scaleX(0.950);transform-origin:0 0;-webkit-text-stroke:0.12px #f01818;">-3248.96</div>
<div class="a" style="left:393px;top:167px;width:34px;height:6px;background:#ebebeb;"></div>
<div class="t" style="left:402.40px;top:168.00px;font-size:5.64px;color:#f01818;transform:scaleX(0.950);transform-origin:0 0;-webkit-text-stroke:0.12px #f01818;">-75.00</div>
<div class="a" style="left:8px;top:174px;width:34px;height:7px;background:#4bbcb6;"></div>
<div class="t" style="left:11.00px;top:176.00px;font-size:5.81px;color:#f6fbfa;transform:scaleX(0.861);transform-origin:0 0;-webkit-text-stroke:0.12px #f6fbfa;">USDJPY</div>
<div class="a" style="left:43px;top:174px;width:49px;height:7px;background:#4bbcb6;"></div>
<div class="t" style="left:52.52px;top:176.00px;font-size:5.64px;color:#f6fbfa;transform:scaleX(0.950);transform-origin:0 0;-webkit-text-stroke:0.12px #f6fbfa;">17</div>
<div class="t" style="left:66.02px;top:176.00px;font-size:5.64px;color:#109a20;transform:scaleX(0.950);transform-origin:0 0;-webkit-text-stroke:0.12px #109a20;">14</div>
<div class="t" style="left:81.01px;top:176.00px;font-size:5.64px;color:#e81c1c;transform:scaleX(0.950);transform-origin:0 0;-webkit-text-stroke:0.12px #e81c1c;">3</div>
<div class="a" style="left:93px;top:174px;width:49px;height:7px;background:#4bbcb6;"></div>
<div class="t" style="left:104.01px;top:176.00px;font-size:5.64px;color:#f6fbfa;transform:scaleX(0.950);transform-origin:0 0;-webkit-text-stroke:0.12px #f6fbfa;">4</div>
<div class="t" style="left:117.51px;top:176.00px;font-size:5.64px;color:#109a20;transform:scaleX(0.950);transform-origin:0 0;-webkit-text-stroke:0.12px #109a20;">2</div>
<div class="t" style="left:131.01px;top:176.00px;font-size:5.64px;color:#e81c1c;transform:scaleX(0.950);transform-origin:0 0;-webkit-text-stroke:0.12px #e81c1c;">2</div>
<div class="a" style="left:143px;top:174px;width:49px;height:7px;background:#4bbcb6;"></div>
<div class="t" style="left:152.52px;top:176.00px;font-size:5.64px;color:#f6fbfa;transform:scaleX(0.950);transform-origin:0 0;-webkit-text-stroke:0.12px #f6fbfa;">13</div>
<div class="t" style="left:166.02px;top:176.00px;font-size:5.64px;color:#109a20;transform:scaleX(0.950);transform-origin:0 0;-webkit-text-stroke:0.12px #109a20;">12</div>
<div class="t" style="left:181.01px;top:176.00px;font-size:5.64px;color:#e81c1c;transform:scaleX(0.950);transform-origin:0 0;-webkit-text-stroke:0.12px #e81c1c;">1</div>
<div class="a" style="left:193px;top:174px;width:24px;height:7px;background:#4bbcb6;"></div>
<div class="t" style="left:198.29px;top:176.00px;font-size:5.64px;color:#f6fbfa;transform:scaleX(0.950);transform-origin:0 0;-webkit-text-stroke:0.12px #f6fbfa;">85.00</div>
<div class="a" style="left:218px;top:174px;width:34px;height:7px;background:#4bbcb6;"></div>
<div class="t" style="left:228.29px;top:176.00px;font-size:5.64px;color:#f6fbfa;transform:scaleX(0.950);transform-origin:0 0;-webkit-text-stroke:0.12px #f6fbfa;">20.00</div>
<div class="a" style="left:253px;top:174px;width:34px;height:7px;background:#4bbcb6;"></div>
<div class="t" style="left:263.29px;top:176.00px;font-size:5.64px;color:#f6fbfa;transform:scaleX(0.950);transform-origin:0 0;-webkit-text-stroke:0.12px #f6fbfa;">65.00</div>
<div class="a" style="left:288px;top:174px;width:34px;height:7px;background:#4bbcb6;"></div>
<div class="t" style="left:293.82px;top:176.00px;font-size:5.64px;color:#f6fbfa;transform:scaleX(0.950);transform-origin:0 0;-webkit-text-stroke:0.12px #f6fbfa;">14839.99</div>
<div class="a" style="left:323px;top:174px;width:34px;height:7px;background:#4bbcb6;"></div>
<div class="t" style="left:329.42px;top:176.00px;font-size:5.64px;color:#f6fbfa;transform:scaleX(0.950);transform-origin:0 0;-webkit-text-stroke:0.12px #f6fbfa;">-1829.28</div>
<div class="a" style="left:358px;top:174px;width:34px;height:7px;background:#ffffff;"></div>
<div class="t" style="left:363.82px;top:176.00px;font-size:5.64px;color:#2a8508;transform:scaleX(0.950);transform-origin:0 0;-webkit-text-stroke:0.12px #2a8508;">13010.71</div>
<div class="a" style="left:393px;top:174px;width:34px;height:7px;background:#ffffff;"></div>
<div class="t" style="left:401.80px;top:176.00px;font-size:5.64px;color:#2a8508;transform:scaleX(0.950);transform-origin:0 0;-webkit-text-stroke:0.12px #2a8508;">400.90</div>
<div class="t" style="left:11.00px;top:184.00px;font-size:5.81px;color:#f6fbfa;transform:scaleX(0.861);transform-origin:0 0;-webkit-text-stroke:0.12px #f6fbfa;">GBPJPY</div>
<div class="t" style="left:52.52px;top:184.00px;font-size:5.64px;color:#f6fbfa;transform:scaleX(0.950);transform-origin:0 0;-webkit-text-stroke:0.12px #f6fbfa;">30</div>
<div class="t" style="left:66.02px;top:184.00px;font-size:5.64px;color:#109a20;transform:scaleX(0.950);transform-origin:0 0;-webkit-text-stroke:0.12px #109a20;">23</div>
<div class="t" style="left:81.01px;top:184.00px;font-size:5.64px;color:#e81c1c;transform:scaleX(0.950);transform-origin:0 0;-webkit-text-stroke:0.12px #e81c1c;">7</div>
<div class="t" style="left:102.72px;top:184.00px;font-size:5.64px;color:#f6fbfa;transform:scaleX(0.950);transform-origin:0 0;-webkit-text-stroke:0.12px #f6fbfa;">11</div>
<div class="t" style="left:117.51px;top:184.00px;font-size:5.64px;color:#109a20;transform:scaleX(0.950);transform-origin:0 0;-webkit-text-stroke:0.12px #109a20;">5</div>
<div class="t" style="left:131.01px;top:184.00px;font-size:5.64px;color:#e81c1c;transform:scaleX(0.950);transform-origin:0 0;-webkit-text-stroke:0.12px #e81c1c;">6</div>
<div class="t" style="left:152.52px;top:184.00px;font-size:5.64px;color:#f6fbfa;transform:scaleX(0.950);transform-origin:0 0;-webkit-text-stroke:0.12px #f6fbfa;">19</div>
<div class="t" style="left:166.02px;top:184.00px;font-size:5.64px;color:#109a20;transform:scaleX(0.950);transform-origin:0 0;-webkit-text-stroke:0.12px #109a20;">18</div>
<div class="t" style="left:181.01px;top:184.00px;font-size:5.64px;color:#e81c1c;transform:scaleX(0.950);transform-origin:0 0;-webkit-text-stroke:0.12px #e81c1c;">1</div>
<div class="t" style="left:196.80px;top:184.00px;font-size:5.64px;color:#f6fbfa;transform:scaleX(0.950);transform-origin:0 0;-webkit-text-stroke:0.12px #f6fbfa;">147.50</div>
<div class="t" style="left:228.29px;top:184.00px;font-size:5.64px;color:#f6fbfa;transform:scaleX(0.950);transform-origin:0 0;-webkit-text-stroke:0.12px #f6fbfa;">52.50</div>
<div class="t" style="left:263.29px;top:184.00px;font-size:5.64px;color:#f6fbfa;transform:scaleX(0.950);transform-origin:0 0;-webkit-text-stroke:0.12px #f6fbfa;">95.00</div>
<div class="t" style="left:293.82px;top:184.00px;font-size:5.64px;color:#f6fbfa;transform:scaleX(0.950);transform-origin:0 0;-webkit-text-stroke:0.12px #f6fbfa;">28973.70</div>
<div class="t" style="left:329.42px;top:184.00px;font-size:5.64px;color:#f6fbfa;transform:scaleX(0.950);transform-origin:0 0;-webkit-text-stroke:0.12px #f6fbfa;">-9873.35</div>
<div class="a" style="left:358px;top:182px;width:34px;height:7px;background:#ebebeb;"></div>
<div class="t" style="left:363.82px;top:184.00px;font-size:5.64px;color:#2a8508;transform:scaleX(0.950);transform-origin:0 0;-webkit-text-stroke:0.12px #2a8508;">19100.35</div>
<div class="a" style="left:393px;top:182px;width:34px;height:7px;background:#ebebeb;"></div>
<div class="t" style="left:401.80px;top:184.00px;font-size:5.64px;color:#2a8508;transform:scaleX(0.950);transform-origin:0 0;-webkit-text-stroke:0.12px #2a8508;">631.50</div>
<div class="a" style="left:8px;top:190px;width:34px;height:7px;background:#4bbcb6;"></div>
<div class="t" style="left:11.00px;top:191.00px;font-size:5.81px;color:#f6fbfa;transform:scaleX(0.861);transform-origin:0 0;-webkit-text-stroke:0.12px #f6fbfa;">EURUSD</div>
<div class="a" style="left:43px;top:190px;width:49px;height:7px;background:#4bbcb6;"></div>
<div class="t" style="left:52.52px;top:191.00px;font-size:5.64px;color:#f6fbfa;transform:scaleX(0.950);transform-origin:0 0;-webkit-text-stroke:0.12px #f6fbfa;">39</div>
<div class="t" style="left:66.02px;top:191.00px;font-size:5.64px;color:#109a20;transform:scaleX(0.950);transform-origin:0 0;-webkit-text-stroke:0.12px #109a20;">36</div>
<div class="t" style="left:81.01px;top:191.00px;font-size:5.64px;color:#e81c1c;transform:scaleX(0.950);transform-origin:0 0;-webkit-text-stroke:0.12px #e81c1c;">3</div>
<div class="a" style="left:93px;top:190px;width:49px;height:7px;background:#4bbcb6;"></div>
<div class="t" style="left:102.52px;top:191.00px;font-size:5.64px;color:#f6fbfa;transform:scaleX(0.950);transform-origin:0 0;-webkit-text-stroke:0.12px #f6fbfa;">18</div>
<div class="t" style="left:116.02px;top:191.00px;font-size:5.64px;color:#109a20;transform:scaleX(0.950);transform-origin:0 0;-webkit-text-stroke:0.12px #109a20;">17</div>
<div class="t" style="left:131.01px;top:191.00px;font-size:5.64px;color:#e81c1c;transform:scaleX(0.950);transform-origin:0 0;-webkit-text-stroke:0.12px #e81c1c;">1</div>
<div class="a" style="left:143px;top:190px;width:49px;height:7px;background:#4bbcb6;"></div>
<div class="t" style="left:152.52px;top:191.00px;font-size:5.64px;color:#f6fbfa;transform:scaleX(0.950);transform-origin:0 0;-webkit-text-stroke:0.12px #f6fbfa;">21</div>
<div class="t" style="left:166.02px;top:191.00px;font-size:5.64px;color:#109a20;transform:scaleX(0.950);transform-origin:0 0;-webkit-text-stroke:0.12px #109a20;">19</div>
<div class="t" style="left:181.01px;top:191.00px;font-size:5.64px;color:#e81c1c;transform:scaleX(0.950);transform-origin:0 0;-webkit-text-stroke:0.12px #e81c1c;">2</div>
<div class="a" style="left:193px;top:190px;width:24px;height:7px;background:#4bbcb6;"></div>
<div class="t" style="left:196.80px;top:191.00px;font-size:5.64px;color:#f6fbfa;transform:scaleX(0.950);transform-origin:0 0;-webkit-text-stroke:0.12px #f6fbfa;">185.00</div>
<div class="a" style="left:218px;top:190px;width:34px;height:7px;background:#4bbcb6;"></div>
<div class="t" style="left:228.29px;top:191.00px;font-size:5.64px;color:#f6fbfa;transform:scaleX(0.950);transform-origin:0 0;-webkit-text-stroke:0.12px #f6fbfa;">90.00</div>
<div class="a" style="left:253px;top:190px;width:34px;height:7px;background:#4bbcb6;"></div>
<div class="t" style="left:263.29px;top:191.00px;font-size:5.64px;color:#f6fbfa;transform:scaleX(0.950);transform-origin:0 0;-webkit-text-stroke:0.12px #f6fbfa;">95.00</div>
<div class="a" style="left:288px;top:190px;width:34px;height:7px;background:#4bbcb6;"></div>
<div class="t" style="left:293.82px;top:191.00px;font-size:5.64px;color:#f6fbfa;transform:scaleX(0.950);transform-origin:0 0;-webkit-text-stroke:0.12px #f6fbfa;">33806.25</div>
<div class="a" style="left:323px;top:190px;width:34px;height:7px;background:#4bbcb6;"></div>
<div class="t" style="left:329.82px;top:191.00px;font-size:5.64px;color:#f6fbfa;transform:scaleX(0.950);transform-origin:0 0;-webkit-text-stroke:0.12px #f6fbfa;">-1118.75</div>
<div class="a" style="left:358px;top:190px;width:34px;height:7px;background:#ffffff;"></div>
<div class="t" style="left:363.82px;top:191.00px;font-size:5.64px;color:#2a8508;transform:scaleX(0.950);transform-origin:0 0;-webkit-text-stroke:0.12px #2a8508;">32687.50</div>
<div class="a" style="left:393px;top:190px;width:34px;height:7px;background:#ffffff;"></div>
<div class="t" style="left:401.80px;top:191.00px;font-size:5.64px;color:#2a8508;transform:scaleX(0.950);transform-origin:0 0;-webkit-text-stroke:0.12px #2a8508;">767.00</div>
<div class="t" style="left:11.00px;top:199.00px;font-size:5.81px;color:#f6fbfa;transform:scaleX(0.861);transform-origin:0 0;-webkit-text-stroke:0.12px #f6fbfa;">GBPUSD</div>
<div class="t" style="left:52.52px;top:199.00px;font-size:5.64px;color:#f6fbfa;transform:scaleX(0.950);transform-origin:0 0;-webkit-text-stroke:0.12px #f6fbfa;">43</div>
<div class="t" style="left:66.02px;top:199.00px;font-size:5.64px;color:#109a20;transform:scaleX(0.950);transform-origin:0 0;-webkit-text-stroke:0.12px #109a20;">39</div>
<div class="t" style="left:81.01px;top:199.00px;font-size:5.64px;color:#e81c1c;transform:scaleX(0.950);transform-origin:0 0;-webkit-text-stroke:0.12px #e81c1c;">4</div>
<div class="t" style="left:102.52px;top:199.00px;font-size:5.64px;color:#f6fbfa;transform:scaleX(0.950);transform-origin:0 0;-webkit-text-stroke:0.12px #f6fbfa;">26</div>
<div class="t" style="left:116.02px;top:199.00px;font-size:5.64px;color:#109a20;transform:scaleX(0.950);transform-origin:0 0;-webkit-text-stroke:0.12px #109a20;">22</div>
<div class="t" style="left:131.01px;top:199.00px;font-size:5.64px;color:#e81c1c;transform:scaleX(0.950);transform-origin:0 0;-webkit-text-stroke:0.12px #e81c1c;">4</div>
<div class="t" style="left:152.52px;top:199.00px;font-size:5.64px;color:#f6fbfa;transform:scaleX(0.950);transform-origin:0 0;-webkit-text-stroke:0.12px #f6fbfa;">17</div>
<div class="t" style="left:166.02px;top:199.00px;font-size:5.64px;color:#109a20;transform:scaleX(0.950);transform-origin:0 0;-webkit-text-stroke:0.12px #109a20;">17</div>
<div class="t" style="left:181.01px;top:199.00px;font-size:5.64px;color:#e81c1c;transform:scaleX(0.950);transform-origin:0 0;-webkit-text-stroke:0.12px #e81c1c;">0</div>
<div class="t" style="left:196.80px;top:199.00px;font-size:5.64px;color:#f6fbfa;transform:scaleX(0.950);transform-origin:0 0;-webkit-text-stroke:0.12px #f6fbfa;">212.50</div>
<div class="t" style="left:226.80px;top:199.00px;font-size:5.64px;color:#f6fbfa;transform:scaleX(0.950);transform-origin:0 0;-webkit-text-stroke:0.12px #f6fbfa;">127.50</div>
<div class="t" style="left:263.29px;top:199.00px;font-size:5.64px;color:#f6fbfa;transform:scaleX(0.950);transform-origin:0 0;-webkit-text-stroke:0.12px #f6fbfa;">85.00</div>
<div class="t" style="left:293.82px;top:199.00px;font-size:5.64px;color:#f6fbfa;transform:scaleX(0.950);transform-origin:0 0;-webkit-text-stroke:0.12px #f6fbfa;">56580.55</div>
<div class="t" style="left:329.42px;top:199.00px;font-size:5.64px;color:#f6fbfa;transform:scaleX(0.950);transform-origin:0 0;-webkit-text-stroke:0.12px #f6fbfa;">-6336.70</div>
<div class="a" style="left:358px;top:198px;width:34px;height:6px;background:#ebebeb;"></div>
<div class="t" style="left:363.82px;top:199.00px;font-size:5.64px;color:#2a8508;transform:scaleX(0.950);transform-origin:0 0;-webkit-text-stroke:0.12px #2a8508;">50243.85</div>
<div class="a" style="left:393px;top:198px;width:34px;height:6px;background:#ebebeb;"></div>
<div class="t" style="left:400.31px;top:199.00px;font-size:5.64px;color:#2a8508;transform:scaleX(0.950);transform-origin:0 0;-webkit-text-stroke:0.12px #2a8508;">1025.30</div>
<div class="a" style="left:8px;top:205px;width:34px;height:7px;background:#4bbcb6;"></div>
<div class="t" style="left:11.00px;top:207.00px;font-size:5.81px;color:#f6fbfa;transform:scaleX(0.861);transform-origin:0 0;-webkit-text-stroke:0.12px #f6fbfa;">XAUUSD</div>
<div class="a" style="left:43px;top:205px;width:49px;height:7px;background:#4bbcb6;"></div>
<div class="t" style="left:51.03px;top:207.00px;font-size:5.64px;color:#f6fbfa;transform:scaleX(0.950);transform-origin:0 0;-webkit-text-stroke:0.12px #f6fbfa;">105</div>
<div class="t" style="left:66.02px;top:207.00px;font-size:5.64px;color:#109a20;transform:scaleX(0.950);transform-origin:0 0;-webkit-text-stroke:0.12px #109a20;">86</div>
<div class="t" style="left:79.52px;top:207.00px;font-size:5.64px;color:#e81c1c;transform:scaleX(0.950);transform-origin:0 0;-webkit-text-stroke:0.12px #e81c1c;">19</div>
<div class="a" style="left:93px;top:205px;width:49px;height:7px;background:#4bbcb6;"></div>
<div class="t" style="left:102.52px;top:207.00px;font-size:5.64px;color:#f6fbfa;transform:scaleX(0.950);transform-origin:0 0;-webkit-text-stroke:0.12px #f6fbfa;">49</div>
<div class="t" style="left:116.02px;top:207.00px;font-size:5.64px;color:#109a20;transform:scaleX(0.950);transform-origin:0 0;-webkit-text-stroke:0.12px #109a20;">36</div>
<div class="t" style="left:129.52px;top:207.00px;font-size:5.64px;color:#e81c1c;transform:scaleX(0.950);transform-origin:0 0;-webkit-text-stroke:0.12px #e81c1c;">13</div>
<div class="a" style="left:143px;top:205px;width:49px;height:7px;background:#4bbcb6;"></div>
<div class="t" style="left:152.52px;top:207.00px;font-size:5.64px;color:#f6fbfa;transform:scaleX(0.950);transform-origin:0 0;-webkit-text-stroke:0.12px #f6fbfa;">56</div>
<div class="t" style="left:166.02px;top:207.00px;font-size:5.64px;color:#109a20;transform:scaleX(0.950);transform-origin:0 0;-webkit-text-stroke:0.12px #109a20;">50</div>
<div class="t" style="left:181.01px;top:207.00px;font-size:5.64px;color:#e81c1c;transform:scaleX(0.950);transform-origin:0 0;-webkit-text-stroke:0.12px #e81c1c;">6</div>
<div class="a" style="left:193px;top:205px;width:24px;height:7px;background:#4bbcb6;"></div>
<div class="t" style="left:196.80px;top:207.00px;font-size:5.64px;color:#f6fbfa;transform:scaleX(0.950);transform-origin:0 0;-webkit-text-stroke:0.12px #f6fbfa;">517.50</div>
<div class="a" style="left:218px;top:205px;width:34px;height:7px;background:#4bbcb6;"></div>
<div class="t" style="left:226.80px;top:207.00px;font-size:5.64px;color:#f6fbfa;transform:scaleX(0.950);transform-origin:0 0;-webkit-text-stroke:0.12px #f6fbfa;">237.50</div>
<div class="a" style="left:253px;top:205px;width:34px;height:7px;background:#4bbcb6;"></div>
<div class="t" style="left:261.80px;top:207.00px;font-size:5.64px;color:#f6fbfa;transform:scaleX(0.950);transform-origin:0 0;-webkit-text-stroke:0.12px #f6fbfa;">280.00</div>
<div class="a" style="left:288px;top:205px;width:34px;height:7px;background:#4bbcb6;"></div>
<div class="t" style="left:292.33px;top:207.00px;font-size:5.64px;color:#f6fbfa;transform:scaleX(0.950);transform-origin:0 0;-webkit-text-stroke:0.12px #f6fbfa;">276364.85</div>
<div class="a" style="left:323px;top:205px;width:34px;height:7px;background:#4bbcb6;"></div>
<div class="t" style="left:327.93px;top:207.00px;font-size:5.64px;color:#f6fbfa;transform:scaleX(0.950);transform-origin:0 0;-webkit-text-stroke:0.12px #f6fbfa;">-18005.10</div>
<div class="a" style="left:358px;top:205px;width:34px;height:7px;background:#ffffff;"></div>
<div class="t" style="left:362.33px;top:207.00px;font-size:5.64px;color:#2a8508;transform:scaleX(0.950);transform-origin:0 0;-webkit-text-stroke:0.12px #2a8508;">258359.75</div>
<div class="a" style="left:393px;top:205px;width:34px;height:7px;background:#ffffff;"></div>
<div class="t" style="left:400.31px;top:207.00px;font-size:5.64px;color:#2a8508;transform:scaleX(0.950);transform-origin:0 0;-webkit-text-stroke:0.12px #2a8508;">5198.30</div>
<div class="t" style="left:11.00px;top:214.00px;font-size:5.81px;color:#f6fbfa;transform:scaleX(0.861);transform-origin:0 0;-webkit-text-stroke:0.12px #f6fbfa;">US30</div>
<div class="t" style="left:52.52px;top:214.00px;font-size:5.64px;color:#f6fbfa;transform:scaleX(0.950);transform-origin:0 0;-webkit-text-stroke:0.12px #f6fbfa;">13</div>
<div class="t" style="left:66.02px;top:214.00px;font-size:5.64px;color:#109a20;transform:scaleX(0.950);transform-origin:0 0;-webkit-text-stroke:0.12px #109a20;">10</div>
<div class="t" style="left:81.01px;top:214.00px;font-size:5.64px;color:#e81c1c;transform:scaleX(0.950);transform-origin:0 0;-webkit-text-stroke:0.12px #e81c1c;">3</div>
<div class="t" style="left:104.01px;top:214.00px;font-size:5.64px;color:#f6fbfa;transform:scaleX(0.950);transform-origin:0 0;-webkit-text-stroke:0.12px #f6fbfa;">4</div>
<div class="t" style="left:117.51px;top:214.00px;font-size:5.64px;color:#109a20;transform:scaleX(0.950);transform-origin:0 0;-webkit-text-stroke:0.12px #109a20;">4</div>
<div class="t" style="left:131.01px;top:214.00px;font-size:5.64px;color:#e81c1c;transform:scaleX(0.950);transform-origin:0 0;-webkit-text-stroke:0.12px #e81c1c;">0</div>
<div class="t" style="left:154.01px;top:214.00px;font-size:5.64px;color:#f6fbfa;transform:scaleX(0.950);transform-origin:0 0;-webkit-text-stroke:0.12px #f6fbfa;">9</div>
<div class="t" style="left:167.51px;top:214.00px;font-size:5.64px;color:#109a20;transform:scaleX(0.950);transform-origin:0 0;-webkit-text-stroke:0.12px #109a20;">6</div>
<div class="t" style="left:181.01px;top:214.00px;font-size:5.64px;color:#e81c1c;transform:scaleX(0.950);transform-origin:0 0;-webkit-text-stroke:0.12px #e81c1c;">3</div>
<div class="t" style="left:196.80px;top:214.00px;font-size:5.64px;color:#f6fbfa;transform:scaleX(0.950);transform-origin:0 0;-webkit-text-stroke:0.12px #f6fbfa;">575.00</div>
<div class="t" style="left:226.80px;top:214.00px;font-size:5.64px;color:#f6fbfa;transform:scaleX(0.950);transform-origin:0 0;-webkit-text-stroke:0.12px #f6fbfa;">200.00</div>
<div class="t" style="left:261.80px;top:214.00px;font-size:5.64px;color:#f6fbfa;transform:scaleX(0.950);transform-origin:0 0;-webkit-text-stroke:0.12px #f6fbfa;">375.00</div>
<div class="t" style="left:293.82px;top:214.00px;font-size:5.64px;color:#f6fbfa;transform:scaleX(0.950);transform-origin:0 0;-webkit-text-stroke:0.12px #f6fbfa;">52944.73</div>
<div class="t" style="left:329.42px;top:214.00px;font-size:5.64px;color:#f6fbfa;transform:scaleX(0.950);transform-origin:0 0;-webkit-text-stroke:0.12px #f6fbfa;">-5831.25</div>
<div class="a" style="left:358px;top:213px;width:34px;height:7px;background:#ebebeb;"></div>
<div class="t" style="left:364.02px;top:214.00px;font-size:5.64px;color:#2a8508;transform:scaleX(0.950);transform-origin:0 0;-webkit-text-stroke:0.12px #2a8508;">47113.48</div>
<div class="a" style="left:393px;top:213px;width:34px;height:7px;background:#ebebeb;"></div>
<div class="t" style="left:398.82px;top:214.00px;font-size:5.64px;color:#2a8508;transform:scaleX(0.950);transform-origin:0 0;-webkit-text-stroke:0.12px #2a8508;">10641.70</div>
<div class="a" style="left:8px;top:221px;width:34px;height:6px;background:#014b47;"></div>
<div class="a" style="left:43px;top:221px;width:49px;height:6px;background:#014b47;"></div>
<div class="t" style="left:51.03px;top:222.00px;font-size:5.64px;color:#f6fbfa;transform:scaleX(0.950);transform-origin:0 0;-webkit-text-stroke:0.12px #f6fbfa;">312</div>
<div class="t" style="left:64.53px;top:222.00px;font-size:5.64px;color:#0c7a18;transform:scaleX(0.950);transform-origin:0 0;-webkit-text-stroke:0.12px #0c7a18;">251</div>
<div class="t" style="left:79.52px;top:222.00px;font-size:5.64px;color:#c81818;transform:scaleX(0.950);transform-origin:0 0;-webkit-text-stroke:0.12px #c81818;">61</div>
<div class="a" style="left:93px;top:221px;width:49px;height:6px;background:#014b47;"></div>
<div class="t" style="left:101.03px;top:222.00px;font-size:5.64px;color:#f6fbfa;transform:scaleX(0.950);transform-origin:0 0;-webkit-text-stroke:0.12px #f6fbfa;">137</div>
<div class="t" style="left:114.53px;top:222.00px;font-size:5.64px;color:#0c7a18;transform:scaleX(0.950);transform-origin:0 0;-webkit-text-stroke:0.12px #0c7a18;">104</div>
<div class="t" style="left:129.52px;top:222.00px;font-size:5.64px;color:#c81818;transform:scaleX(0.950);transform-origin:0 0;-webkit-text-stroke:0.12px #c81818;">33</div>
<div class="a" style="left:143px;top:221px;width:49px;height:6px;background:#014b47;"></div>
<div class="t" style="left:151.03px;top:222.00px;font-size:5.64px;color:#f6fbfa;transform:scaleX(0.950);transform-origin:0 0;-webkit-text-stroke:0.12px #f6fbfa;">175</div>
<div class="t" style="left:164.53px;top:222.00px;font-size:5.64px;color:#0c7a18;transform:scaleX(0.950);transform-origin:0 0;-webkit-text-stroke:0.12px #0c7a18;">147</div>
<div class="t" style="left:179.52px;top:222.00px;font-size:5.64px;color:#c81818;transform:scaleX(0.950);transform-origin:0 0;-webkit-text-stroke:0.12px #c81818;">28</div>
<div class="a" style="left:193px;top:221px;width:24px;height:6px;background:#014b47;"></div>
<div class="t" style="left:195.31px;top:222.00px;font-size:5.64px;color:#f6fbfa;transform:scaleX(0.950);transform-origin:0 0;-webkit-text-stroke:0.12px #f6fbfa;">2842.50</div>
<div class="a" style="left:218px;top:221px;width:34px;height:6px;background:#014b47;"></div>
<div class="t" style="left:226.80px;top:222.00px;font-size:5.64px;color:#f6fbfa;transform:scaleX(0.950);transform-origin:0 0;-webkit-text-stroke:0.12px #f6fbfa;">852.50</div>
<div class="a" style="left:253px;top:221px;width:34px;height:6px;background:#014b47;"></div>
<div class="t" style="left:260.51px;top:222.00px;font-size:5.64px;color:#f6fbfa;transform:scaleX(0.950);transform-origin:0 0;-webkit-text-stroke:0.12px #f6fbfa;">1190.00</div>
<div class="a" style="left:288px;top:221px;width:34px;height:6px;background:#014b47;"></div>
<div class="t" style="left:292.33px;top:222.00px;font-size:5.64px;color:#f6fbfa;transform:scaleX(0.950);transform-origin:0 0;-webkit-text-stroke:0.12px #f6fbfa;">505664.06</div>
<div class="a" style="left:323px;top:221px;width:34px;height:6px;background:#014b47;"></div>
<div class="t" style="left:327.93px;top:222.00px;font-size:5.64px;color:#f6fbfa;transform:scaleX(0.950);transform-origin:0 0;-webkit-text-stroke:0.12px #f6fbfa;">-61372.00</div>
<div class="a" style="left:358px;top:221px;width:34px;height:7px;background:#0a8a0a;"></div>
<div class="t" style="left:362.33px;top:222.00px;font-size:5.64px;color:#d8e8b0;transform:scaleX(0.950);transform-origin:0 0;-webkit-text-stroke:0.12px #d8e8b0;">444292.06</div>
<div class="a" style="left:393px;top:221px;width:34px;height:7px;background:#0a8a0a;"></div>
<div class="t" style="left:398.82px;top:222.00px;font-size:5.64px;color:#d8e8b0;transform:scaleX(0.950);transform-origin:0 0;-webkit-text-stroke:0.12px #d8e8b0;">19249.40</div>
<div class="a" style="left:8px;top:228.5px;width:419px;height:13.5px;background:#044c48;"></div>
<div class="t" style="left:12.00px;top:233.00px;font-size:6.25px;color:#eef4f2;transform:scaleX(0.891);transform-origin:0 0;-webkit-text-stroke:0.12px #eef4f2;">Report from 2017.01.01 until 2023.12.31</div>
<div class="t" style="left:157.20px;top:233.00px;font-size:6.25px;color:#eef4f2;transform:scaleX(0.901);transform-origin:0 0;-webkit-text-stroke:0.12px #eef4f2;">www.reitakfx.com - discord.gg/reitakfx</div>
<div class="t" style="left:384.50px;top:233.00px;font-size:6.25px;color:#eef4f2;transform:scaleX(0.826);transform-origin:0 0;-webkit-text-stroke:0.12px #eef4f2;">CLOSED trades</div>
<div class="a" style="left:0px;top:455px;width:640px;height:1px;background:#c8c8c8;"></div>
<div class="a" style="left:0px;top:456px;width:640px;height:12px;background:#eeeeee;"></div>
<div class="a" style="left:0px;top:457px;width:640px;height:1px;background:#8c8c8c;"></div>
<div class="a" style="left:0px;top:457px;width:1px;height:10px;background:#8c8c8c;"></div>
<div class="a" style="left:639px;top:456px;width:1px;height:12px;background:#c8c8c8;"></div>
<div class="t" style="left:8.00px;top:459.00px;font-size:6.54px;color:#76768c;transform:scaleX(0.846);transform-origin:0 0;">XAUUSD,M1</div>
<div class="a" style="left:47px;top:456px;width:46px;height:10px;background:#ffffff;border-left:1px solid #484848;border-right:1px solid #484848;border-bottom:1px solid #484848"></div>
<div class="a" style="left:0px;top:467px;width:640px;height:1px;background:#bcbcbc;"></div>
<div class="t" style="left:52.80px;top:459.00px;font-size:6.54px;color:#202050;transform:scaleX(0.842);transform-origin:0 0;-webkit-text-stroke:0.25px #202050;">GBPUSD,M30</div>
<div class="t" style="left:100.00px;top:459.00px;font-size:6.54px;color:#76768c;transform:scaleX(0.804);transform-origin:0 0;">XAUUSD,M30</div>
<div class="t" style="left:145.30px;top:459.00px;font-size:6.54px;color:#76768c;transform:scaleX(0.816);transform-origin:0 0;">GBPUSD,M30</div>
<div class="t" style="left:190.60px;top:459.00px;font-size:6.54px;color:#76768c;transform:scaleX(0.816);transform-origin:0 0;">EURUSD,M30</div>
<div class="t" style="left:237.20px;top:459.00px;font-size:6.54px;color:#76768c;transform:scaleX(0.799);transform-origin:0 0;">GBPJPY,M15</div>
<div class="t" style="left:281.25px;top:459.00px;font-size:6.54px;color:#76768c;transform:scaleX(0.850);transform-origin:0 0;">US30,M30</div>
<div class="t" style="left:318.40px;top:459.00px;font-size:6.54px;color:#76768c;transform:scaleX(0.848);transform-origin:0 0;">CHFJPY,M15</div>
<div class="a" style="left:140px;top:457px;width:1px;height:7px;background:#707070;"></div>
<div class="a" style="left:186px;top:457px;width:1px;height:7px;background:#707070;"></div>
<div class="a" style="left:232px;top:457px;width:1px;height:7px;background:#707070;"></div>
<div class="a" style="left:276px;top:457px;width:1px;height:7px;background:#707070;"></div>
<div class="a" style="left:313px;top:457px;width:1px;height:7px;background:#707070;"></div>
<div class="a" style="left:358px;top:457px;width:1px;height:7px;background:#707070;"></div>
<svg style="left:622px;top:458px" width="16" height="6"><path d="M4 0.8 l-2 2 l2 2 z M12 0.8 l2 2 l-2 2 z" fill="#808080"/></svg>
<div class="a" style="left:0px;top:468px;width:640px;height:12px;background:#f0f0f0;"></div>
<div class="a" style="left:7px;top:468px;width:633px;height:12px;background:#ffffff;"></div>
<div class="a" style="left:7px;top:468px;width:633px;height:1px;background:#dcdcdc;"></div>
<div class="a" style="left:7px;top:468px;width:1px;height:12px;background:#dcdcdc;"></div>
<svg style="left:1.5px;top:469.5px" width="5" height="5"><path d="M0.5 0.5 l3.5 3.5 M4 0.5 l-3.5 3.5" stroke="#202020" stroke-width="1"/></svg>
<div class="a" style="left:3px;top:475px;width:1px;height:4px;background:#b0b0b0;"></div>
<svg style="left:10px;top:471px" width="6" height="6"><circle cx="2.7" cy="2.7" r="1.7" fill="#b0b0b0" stroke="#909090" stroke-width="0.5"/></svg>
<div class="t" style="left:16.90px;top:471.00px;font-size:6.83px;color:#181830;transform:scaleX(0.793);transform-origin:0 0;-webkit-text-stroke:0.2px #181830;">Balance: 10 011 807.38 USD</div>
<div class="t" style="left:90.00px;top:471.00px;font-size:6.83px;color:#181830;transform:scaleX(0.846);transform-origin:0 0;-webkit-text-stroke:0.2px #181830;">Profit/Loss: 4 403.74</div>
<div class="t" style="left:146.00px;top:471.00px;font-size:6.83px;color:#181830;transform:scaleX(0.819);transform-origin:0 0;-webkit-text-stroke:0.2px #181830;">Equity: 10 016 211.12</div>
<div class="t" style="left:203.00px;top:471.00px;font-size:6.83px;color:#181830;transform:scaleX(0.824);transform-origin:0 0;-webkit-text-stroke:0.2px #181830;">Margin: 426 048.94</div>
<div class="t" style="left:255.50px;top:471.00px;font-size:6.83px;color:#181830;transform:scaleX(0.814);transform-origin:0 0;-webkit-text-stroke:0.2px #181830;">Free margin: 9 590 162.18</div>
<div class="t" style="left:325.00px;top:471.00px;font-size:6.83px;color:#181830;transform:scaleX(0.832);transform-origin:0 0;-webkit-text-stroke:0.2px #181830;">Margin level: 2350.95%</div>
</body></html>
